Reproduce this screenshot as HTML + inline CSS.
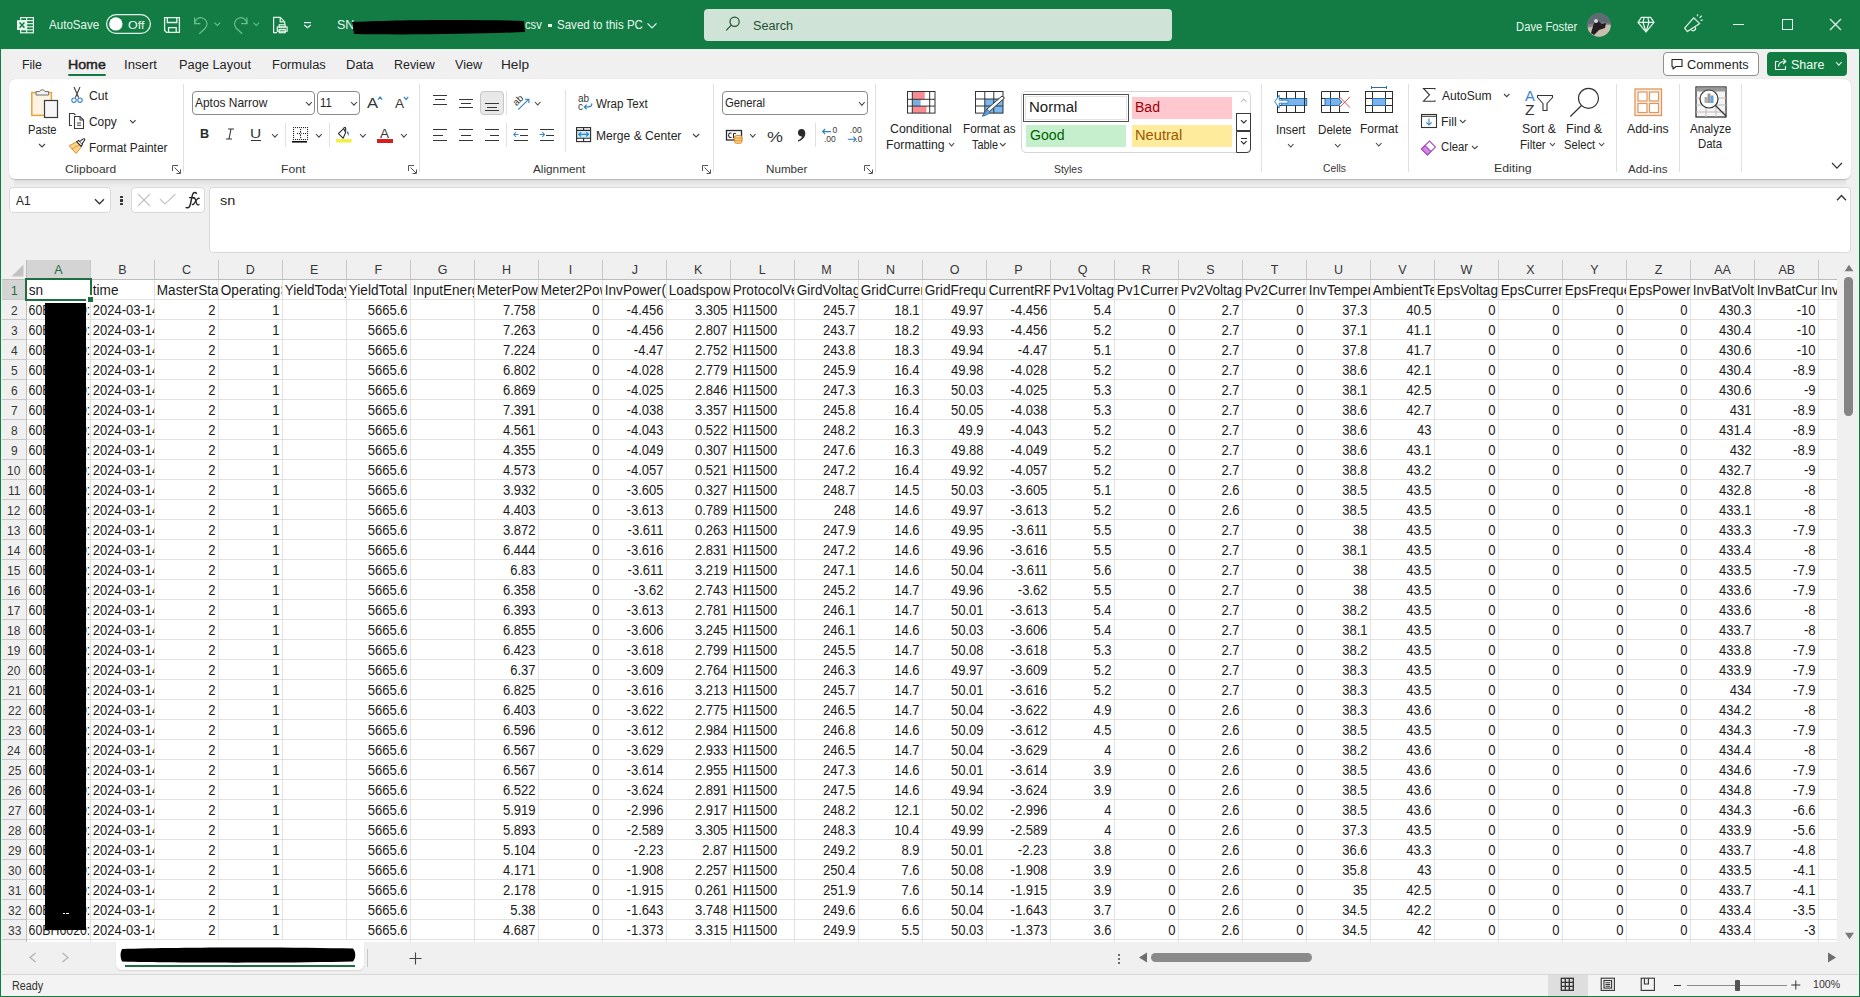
<!DOCTYPE html><html><head><meta charset="utf-8"><style>
*{margin:0;padding:0}
html,body{width:1860px;height:997px;overflow:hidden;background:#f0f0f0}
body{position:relative;font-family:"Liberation Sans",sans-serif}
.a{position:absolute}
.t{position:absolute;white-space:pre;line-height:normal;transform-origin:0 0}
.c{position:absolute;height:19px;box-sizing:border-box;overflow:hidden;white-space:pre;line-height:19px;color:#1a1a1a;font-size:14px;padding-top:0.5px;width:67.74px;transform:scaleX(0.93)}
.r{text-align:right;padding-right:2.37px;transform-origin:100% 0}
.l{padding-left:1.83px;transform-origin:0 0}
svg{overflow:visible}
</style></head><body><div class="a" style="left:0px;top:48px;width:1860px;height:949px;background:#f0f0f0"></div><span class="t" style="left:21.98px;top:58.00px;font-size:12.5px;color:#242424;transform:scaleX(0.9912);">File</span><span class="t" style="left:67.63px;top:58.00px;font-size:12.5px;color:#242424;transform:scaleX(1.1327);-webkit-text-stroke:0.45px #242424">Home</span><span class="t" style="left:124.18px;top:58.00px;font-size:12.5px;color:#242424;transform:scaleX(1.0533);">Insert</span><span class="t" style="left:178.94px;top:58.00px;font-size:12.5px;color:#242424;transform:scaleX(1.0252);">Page Layout</span><span class="t" style="left:272.23px;top:58.00px;font-size:12.5px;color:#242424;transform:scaleX(1.0331);">Formulas</span><span class="t" style="left:345.92px;top:58.00px;font-size:12.5px;color:#242424;transform:scaleX(1.0443);">Data</span><span class="t" style="left:393.97px;top:58.00px;font-size:12.5px;color:#242424;transform:scaleX(0.9950);">Review</span><span class="t" style="left:454.94px;top:58.00px;font-size:12.5px;color:#242424;transform:scaleX(1.0058);">View</span><span class="t" style="left:500.87px;top:58.00px;font-size:12.5px;color:#242424;transform:scaleX(1.0929);">Help</span><div class="a" style="left:68px;top:73.8px;width:38px;height:2.6px;background:#107c41;border-radius:1px"></div><div class="a" style="left:1663px;top:52px;width:96px;height:24px;background:#fff;border:1px solid #8f8f8f;border-radius:4px;box-sizing:border-box"></div><svg class="a" style="left:1670px;top:58px;" width="14" height="13" viewBox="0 0 14 13"><path d="M2 1.5 H12 V8.5 H6 L3 11 V8.5 H2 Z" fill="none" stroke="#242424" stroke-width="1.1" stroke-linejoin="round"/></svg><span class="t" style="left:1687.26px;top:58.00px;font-size:12.5px;color:#242424;transform:scaleX(1.0206);">Comments</span><div class="a" style="left:1767px;top:52px;width:80px;height:24px;background:#107c41;border-radius:4px"></div><svg class="a" style="left:1774px;top:57px;" width="14" height="14" viewBox="0 0 14 14"><g fill="none" stroke="#f2fff6" stroke-width="1.1" stroke-linejoin="round"><path d="M4.5 4.5 H1.5 V12.5 H11.5 V9"/><path d="M4.5 10 C4.5 6 7 4.5 11 4.5 M9 2 L11.8 4.5 L9 7"/></g></svg><span class="t" style="left:1790.64px;top:58.00px;font-size:12.5px;color:#f2fff6;transform:scaleX(1.0016);">Share</span><svg class="a" style="left:1834.6px;top:61.3px;" width="7.7" height="5.2" viewBox="0 0 7.7 5.2"><path d="M1 1 L3.85 4.2 L6.7 1" fill="none" stroke="#f2fff6" stroke-width="1.1"/></svg><div class="a" style="left:0px;top:0px;width:1860px;height:49px;background:#127c44"></div><div class="a" style="left:1px;top:49px;width:1858px;height:1px;background:#e3f3e8"></div><svg class="a" style="left:16px;top:16px;" width="18" height="18" viewBox="0 0 18 18"><g fill="none" stroke="#e6f8ec" stroke-width="1.2"><rect x="4.6" y="1.6" width="12.8" height="15.2"/><line x1="10.6" y1="1.6" x2="10.6" y2="16.8"/><line x1="4.6" y1="4.6" x2="17.4" y2="4.6"/><line x1="4.6" y1="7.7" x2="17.4" y2="7.7"/><line x1="4.6" y1="10.8" x2="17.4" y2="10.8"/><line x1="4.6" y1="13.8" x2="17.4" y2="13.8"/></g><rect x="1" y="4.2" width="10" height="9.8" fill="#e6f8ec"/><path d="M3.6 6.4 L8.4 11.8 M8.4 6.4 L3.6 11.8" stroke="#127c44" stroke-width="1.5"/></svg><span class="t" style="left:49.37px;top:18.00px;font-size:12.5px;color:#e6f8ec;transform:scaleX(0.9268);">AutoSave</span><svg class="a" style="left:106px;top:14px;" width="45" height="20" viewBox="0 0 45 20"><rect x="0.6" y="0.6" width="43.8" height="18.8" rx="9.4" fill="none" stroke="#e6f8ec" stroke-width="1.25"/></svg><svg class="a" style="left:108px;top:16px;" width="15" height="15" viewBox="0 0 15 15"><circle cx="7.8" cy="7.9" r="6.7" fill="#ffffff"/></svg><span class="t" style="left:128.31px;top:19.00px;font-size:11.5px;color:#e6f8ec;transform:scaleX(1.0818);">Off</span><svg class="a" style="left:163px;top:16px;" width="18" height="18" viewBox="0 0 18 18"><g fill="none" stroke="#e6f8ec" stroke-width="1.3"><path d="M1.6 1.6 H16.4 V16.4 H3.6 L1.6 14.4 Z"/><path d="M4.3 1.6 V6.5 H13.8 V1.6"/><path d="M5.6 16.4 V11.6 H13.2 V16.4"/></g></svg><svg class="a" style="left:192px;top:16px;" width="18" height="18" viewBox="0 0 18 18"><g fill="none" stroke="#6cbf8e" stroke-width="1.2"><path d="M2.6 1.5 V7.7 H8.4"/><path d="M2.6 7.7 A6.2 6.2 0 1 1 13.5 12 L7.3 17.8"/></g></svg><svg class="a" style="left:213px;top:21px;" width="9" height="6" viewBox="0 0 9 6"><path d="M1.4 1.6 L4.3 4.4 L7.2 1.6" fill="none" stroke="#6cbf8e" stroke-width="1.1"/></svg><svg class="a" style="left:232px;top:16px;" width="18" height="18" viewBox="0 0 18 18"><g fill="none" stroke="#6cbf8e" stroke-width="1.2"><path d="M14.9 1.5 V7.7 H9.1"/><path d="M14.9 7.7 A6.2 6.2 0 1 0 4 12 L10.2 17.8"/></g></svg><svg class="a" style="left:252px;top:21px;" width="9" height="6" viewBox="0 0 9 6"><path d="M1.4 1.6 L4.3 4.4 L7.2 1.6" fill="none" stroke="#6cbf8e" stroke-width="1.1"/></svg><svg class="a" style="left:272px;top:16px;" width="18" height="18" viewBox="0 0 18 18"><g fill="none" stroke="#e6f8ec" stroke-width="1.2"><path d="M5 16.6 H1.6 V1.4 H8.2 L12.7 5.9 V8.6"/><path d="M8.2 1.4 V5.9 H12.7"/><rect x="5.3" y="11" width="9.8" height="4.2"/><rect x="7.2" y="8.8" width="6" height="2.2"/><rect x="7.2" y="13.4" width="6" height="3.3"/></g></svg><svg class="a" style="left:302px;top:20px;" width="11" height="10" viewBox="0 0 11 10"><g fill="none" stroke="#e6f8ec" stroke-width="1.2"><line x1="2" y1="2.6" x2="9" y2="2.6"/><path d="M2.3 5 L5.5 7.8 L8.7 5"/></g></svg><span class="t" style="left:336.94px;top:18.00px;font-size:12.5px;color:#e6f8ec;">SN</span><svg class="a" style="left:348px;top:17px;" width="180" height="19" viewBox="0 0 180 19"><path d="M4 5 C40 3 120 2 176 4 L177 15 C130 17 60 18 6 17 Z" fill="#000"/></svg><span class="t" style="left:525.02px;top:18.00px;font-size:12.5px;color:#e6f8ec;transform:scaleX(0.8962);">csv</span><div class="a" style="left:548.3px;top:23.8px;width:3.4px;height:3.4px;background:#e6f8ec"></div><span class="t" style="left:556.68px;top:18.00px;font-size:12.5px;color:#e6f8ec;transform:scaleX(0.9230);">Saved to this PC</span><svg class="a" style="left:646px;top:20.5px;" width="12" height="10" viewBox="0 0 12 10"><path d="M1.5 2.4 L6 6.9 L10.5 2.4" fill="none" stroke="#e6f8ec" stroke-width="1.3"/></svg><div class="a" style="left:704px;top:9px;width:468px;height:32px;background:#cfe3d6;border-radius:4px"></div><svg class="a" style="left:724px;top:15px;" width="18" height="18" viewBox="0 0 18 18"><g fill="none" stroke="#1d5232" stroke-width="1.2"><circle cx="10.6" cy="6.8" r="4.6"/><line x1="7.3" y1="10.1" x2="2.2" y2="15.3"/></g></svg><span class="t" style="left:753.43px;top:19.00px;font-size:12.5px;color:#1f4f33;transform:scaleX(1.0118);">Search</span><span class="t" style="left:1516.47px;top:20.00px;font-size:12.5px;color:#e6f8ec;transform:scaleX(0.9006);">Dave Foster</span><svg class="a" style="left:1587px;top:13px;" width="24" height="24" viewBox="0 0 24 24"><defs><clipPath id="av"><circle cx="12" cy="12" r="11.8"/></clipPath></defs><g clip-path="url(#av)"><rect width="24" height="24" fill="#7d8388"/><path d="M0 0 H24 V11 C18 9 10 8 0 12 Z" fill="#5f6972"/><path d="M0 15 C8 12 16 11 24 12 V24 H0 Z" fill="#c9bfb0"/><path d="M4 20 L7 10 L11 8 L15 11 L19 10 L18 15 L12 17 L7 22 Z" fill="#231c20"/><circle cx="9" cy="8" r="2" fill="#d8d8e0"/></g></svg><svg class="a" style="left:1636px;top:15px;" width="20" height="18" viewBox="0 0 20 18"><g fill="none" stroke="#e6f8ec" stroke-width="1.2" stroke-linejoin="round"><path d="M2 7.4 L5.4 2.4 H14.6 L18 7.4 L10 16.8 Z"/><path d="M2 7.4 H18 M8.2 2.4 L7 7.4 L10 16.8 L13 7.4 L11.8 2.4"/></g></svg><svg class="a" style="left:1682px;top:12px;" width="22" height="22" viewBox="0 0 22 22"><g fill="none" stroke="#e6f8ec" stroke-width="1.2" stroke-linejoin="round"><path d="M2.6 16.2 L11.6 5.8 L17.8 11.6 L5.4 19.6 Z"/><path d="M9.4 17.6 A2.1 2.1 0 0 0 13.2 15.2"/><path d="M15.2 4.2 L15.9 2.4 M17.6 5.8 L19.8 3.6 M18.6 8.4 L20.8 8"/></g></svg><div class="a" style="left:1733px;top:24px;width:11px;height:1.2px;background:#e6f8ec"></div><div class="a" style="left:1782px;top:19px;width:10.5px;height:10.5px;border:1.2px solid #e6f8ec;box-sizing:border-box"></div><svg class="a" style="left:1829px;top:18px;" width="13" height="13" viewBox="0 0 13 13"><path d="M1 1 L12 12 M12 1 L1 12" stroke="#e6f8ec" stroke-width="1.2"/></svg><div class="a" style="left:14px;top:176px;width:1832px;height:11px;background:linear-gradient(#cfcfcf,#dedede 30%,#efefef)"></div><div class="a" style="left:9px;top:79px;width:1842px;height:100px;background:#fff;border-radius:6px;box-shadow:0 0.5px 0.8px rgba(0,0,0,0.16), 0 0 1px rgba(0,0,0,0.10)"></div><svg class="a" style="left:30px;top:87px;" width="29" height="32" viewBox="0 0 29 32"><rect x="1.8" y="5.6" width="19.6" height="22.8" fill="#fdf3e2" stroke="#e8a33d" stroke-width="1.5"/><path d="M6 8 V4.6 H9.5 A3 3 0 0 1 15 4.6 H18.6 V8 Z" fill="#f4f4f4" stroke="#6e6e6e" stroke-width="1"/><rect x="14.5" y="13.5" width="13" height="17" fill="#f7f7f7" stroke="#3b3b3b" stroke-width="1.2"/></svg><span class="t" style="left:27.98px;top:123.00px;font-size:12px;color:#242424;transform:scaleX(0.9294);">Paste</span><svg class="a" style="left:37.5px;top:143px;" width="8" height="5" viewBox="0 0 8 5"><path d="M1 1 L4.0 4 L7 1" fill="none" stroke="#424242" stroke-width="1.1"/></svg><svg class="a" style="left:70px;top:86px;" width="14" height="18" viewBox="0 0 14 18"><g fill="none" stroke-width="1.1"><path d="M4 1 L8.6 11.5 M10 1 L5.4 11.5" stroke="#3b3b3b"/><circle cx="4" cy="14.2" r="2.2" stroke="#3a86c8"/><circle cx="10" cy="14.2" r="2.2" stroke="#3a86c8"/></g></svg><span class="t" style="left:89.09px;top:89.00px;font-size:12px;color:#242424;transform:scaleX(1.0128);">Cut</span><svg class="a" style="left:68px;top:112px;" width="18" height="18" viewBox="0 0 18 18"><g fill="none" stroke="#3b3b3b" stroke-width="1.1"><path d="M4 13.5 H1.5 V1.5 H6 L7.5 3"/><path d="M6.5 4.5 H12 L15.5 8 V16.5 H6.5 Z"/><path d="M12 4.5 V8 H15.5"/><path d="M9 11 H13 M9 13.3 H13"/></g></svg><span class="t" style="left:89.11px;top:115.00px;font-size:12px;color:#242424;transform:scaleX(0.9894);">Copy</span><svg class="a" style="left:128.7px;top:118.8px;" width="7.6" height="5" viewBox="0 0 7.6 5"><path d="M1 1 L3.8 4 L6.6 1" fill="none" stroke="#424242" stroke-width="1.1"/></svg><svg class="a" style="left:68px;top:138px;" width="18" height="17" viewBox="0 0 18 17"><path d="M1.2 7.8 L8.8 3.8 L13.4 8.6 L8.2 15.6 Z" fill="#fbd38c" stroke="#e0942e" stroke-width="1" stroke-linejoin="round"/><path d="M3.5 11 L11.2 7.2" stroke="#e0942e" stroke-width="0.9"/><path d="M8.6 3.6 L10.6 2.4 L14.4 6.2 L13.2 8.4 Z" fill="#fff" stroke="#2a2a2a" stroke-width="1.1" stroke-linejoin="round"/><path d="M11.6 3.6 L15.2 0.9 C16.2 0.3 17.2 1.3 16.6 2.3 L14 5.8" fill="#fff" stroke="#2a2a2a" stroke-width="1.1"/></svg><span class="t" style="left:88.72px;top:141.00px;font-size:12px;color:#242424;transform:scaleX(0.9887);">Format Painter</span><span class="t" style="left:64.90px;top:163.00px;font-size:11.5px;color:#363636;transform:scaleX(1.0412);">Clipboard</span><svg class="a" style="left:172px;top:165px;" width="9" height="9" viewBox="0 0 9 9"><g fill="none" stroke="#555" stroke-width="1"><path d="M0.5 6 V0.5 H6"/><path d="M2.5 2.5 L8 8 M4.5 8.5 H8.5 V4.5"/></g></svg><div class="a" style="left:183px;top:84px;width:1px;height:88px;background:#e0e0e0"></div><div class="a" style="left:192px;top:91px;width:123px;height:24px;border:1px solid #8a8a8a;border-radius:4px;box-sizing:border-box"></div><span class="t" style="left:195.27px;top:95.00px;font-size:13px;color:#242424;transform:scaleX(0.9181);">Aptos Narrow</span><svg class="a" style="left:304.6px;top:100.5px;" width="7.9" height="5.2" viewBox="0 0 7.9 5.2"><path d="M1 1 L3.95 4.2 L6.9 1" fill="none" stroke="#424242" stroke-width="1.1"/></svg><div class="a" style="left:317px;top:91px;width:43px;height:24px;border:1px solid #8a8a8a;border-radius:4px;box-sizing:border-box"></div><span class="t" style="left:319.66px;top:95.00px;font-size:13px;color:#242424;transform:scaleX(0.8659);">11</span><svg class="a" style="left:349.8px;top:100.5px;" width="7.9" height="5.2" viewBox="0 0 7.9 5.2"><path d="M1 1 L3.95 4.2 L6.9 1" fill="none" stroke="#424242" stroke-width="1.1"/></svg><span class="t" style="left:366.96px;top:94.00px;font-size:15.5px;color:#363636;transform:scaleX(1.0712);">A</span><svg class="a" style="left:376.5px;top:95.5px;" width="6.2" height="4.6" viewBox="0 0 6.2 4.6"><path d="M1 3.6 L3.1 1 L5.2 3.6" fill="none" stroke="#3a86c8" stroke-width="1.2"/></svg><span class="t" style="left:394.67px;top:96.00px;font-size:13px;color:#363636;transform:scaleX(1.0450);">A</span><svg class="a" style="left:402.5px;top:95.5px;" width="6.2" height="4.6" viewBox="0 0 6.2 4.6"><path d="M1 1 L3.1 3.6 L5.2 1" fill="none" stroke="#3a86c8" stroke-width="1.2"/></svg><span class="t" style="left:199.65px;top:126.00px;font-size:13px;color:#2a2a2a;font-weight:700;transform:scaleX(0.9710);">B</span><svg class="a" style="left:225px;top:128px;" width="10" height="12" viewBox="0 0 10 12"><g stroke="#363636" stroke-width="1.1"><path d="M3 1 H9 M1 11 H7 M6 1 L4 11"/></g></svg><span class="t" style="left:249.80px;top:127.00px;font-size:12px;color:#363636;transform:scaleX(1.2922);">U</span><div class="a" style="left:250.5px;top:140px;width:10px;height:1.1px;background:#363636"></div><svg class="a" style="left:270.5px;top:132.8px;" width="7.8" height="5.2" viewBox="0 0 7.8 5.2"><path d="M1 1 L3.9 4.2 L6.8 1" fill="none" stroke="#424242" stroke-width="1.1"/></svg><div class="a" style="left:285px;top:123px;width:1px;height:24px;background:#e0e0e0"></div><svg class="a" style="left:292px;top:126px;" width="17" height="18" viewBox="0 0 17 18"><g fill="#2a2a2a"><rect x="1" y="1" width="1.1" height="1.1"/><rect x="1" y="13" width="1.1" height="1.1"/><rect x="3" y="1" width="1.1" height="1.1"/><rect x="3" y="13" width="1.1" height="1.1"/><rect x="5" y="1" width="1.1" height="1.1"/><rect x="5" y="13" width="1.1" height="1.1"/><rect x="7" y="1" width="1.1" height="1.1"/><rect x="7" y="13" width="1.1" height="1.1"/><rect x="9" y="1" width="1.1" height="1.1"/><rect x="9" y="13" width="1.1" height="1.1"/><rect x="11" y="1" width="1.1" height="1.1"/><rect x="11" y="13" width="1.1" height="1.1"/><rect x="13" y="1" width="1.1" height="1.1"/><rect x="13" y="13" width="1.1" height="1.1"/><rect x="15" y="1" width="1.1" height="1.1"/><rect x="15" y="13" width="1.1" height="1.1"/><rect x="1" y="3" width="1.1" height="1.1"/><rect x="15" y="3" width="1.1" height="1.1"/><rect x="1" y="5" width="1.1" height="1.1"/><rect x="15" y="5" width="1.1" height="1.1"/><rect x="1" y="7" width="1.1" height="1.1"/><rect x="15" y="7" width="1.1" height="1.1"/><rect x="1" y="9" width="1.1" height="1.1"/><rect x="15" y="9" width="1.1" height="1.1"/><rect x="1" y="11" width="1.1" height="1.1"/><rect x="15" y="11" width="1.1" height="1.1"/><rect x="5" y="7" width="1.1" height="1.1"/><rect x="7" y="7" width="1.1" height="1.1"/><rect x="11" y="7" width="1.1" height="1.1"/><rect x="13" y="7" width="1.1" height="1.1"/><rect x="8" y="3" width="1.1" height="1.1"/><rect x="8" y="5" width="1.1" height="1.1"/><rect x="8" y="9" width="1.1" height="1.1"/><rect x="8" y="11" width="1.1" height="1.1"/></g><path d="M7.4 7.5 L8.5 6.4 L9.6 7.5 L8.5 8.6 Z" fill="none" stroke="#2a2a2a" stroke-width="0.8"/><rect x="0" y="15" width="15" height="1.6" fill="#111"/></svg><svg class="a" style="left:314.6px;top:133px;" width="7.8" height="5.2" viewBox="0 0 7.8 5.2"><path d="M1 1 L3.9 4.2 L6.8 1" fill="none" stroke="#424242" stroke-width="1.1"/></svg><div class="a" style="left:329px;top:123px;width:1px;height:24px;background:#e0e0e0"></div><svg class="a" style="left:336px;top:126px;" width="17" height="18" viewBox="0 0 17 18"><path d="M2.4 7.7 L7.6 2.6 L9.6 6.6 L7.1 12.2 Z" fill="#fff" stroke="#2a2a2a" stroke-width="1.1" stroke-linejoin="round"/><path d="M7.6 2.6 C8 0.8 9.6 0.8 9.7 2.4 V5.6" fill="none" stroke="#2a2a2a" stroke-width="1.1"/><path d="M10.8 6.2 C12.2 4.2 13 6.5 12.6 10.2 C12 8.6 11.6 7.6 10.8 6.2 Z" fill="#1e5a8c"/><rect x="0.2" y="13.1" width="15.4" height="3.4" fill="#f3f03c"/></svg><svg class="a" style="left:358.8px;top:133px;" width="7.8" height="5.2" viewBox="0 0 7.8 5.2"><path d="M1 1 L3.9 4.2 L6.8 1" fill="none" stroke="#424242" stroke-width="1.1"/></svg><span class="t" style="left:380.47px;top:127.00px;font-size:12.5px;color:#363636;transform:scaleX(1.0868);">A</span><div class="a" style="left:377px;top:139.2px;width:16px;height:3.8px;background:#d81e1e"></div><svg class="a" style="left:399.5px;top:133px;" width="7.8" height="5.2" viewBox="0 0 7.8 5.2"><path d="M1 1 L3.9 4.2 L6.8 1" fill="none" stroke="#424242" stroke-width="1.1"/></svg><span class="t" style="left:281.40px;top:163.00px;font-size:11.5px;color:#363636;transform:scaleX(1.0562);">Font</span><svg class="a" style="left:408px;top:165px;" width="9" height="9" viewBox="0 0 9 9"><g fill="none" stroke="#555" stroke-width="1"><path d="M0.5 6 V0.5 H6"/><path d="M2.5 2.5 L8 8 M4.5 8.5 H8.5 V4.5"/></g></svg><div class="a" style="left:419px;top:84px;width:1px;height:88px;background:#e0e0e0"></div><div class="a" style="left:433px;top:95.1px;width:14px;height:1.2px;background:#363636"></div><div class="a" style="left:435px;top:99.3px;width:10px;height:1.2px;background:#363636"></div><div class="a" style="left:433px;top:103.7px;width:14px;height:1.2px;background:#363636"></div><div class="a" style="left:459px;top:98.7px;width:14px;height:1.2px;background:#363636"></div><div class="a" style="left:461px;top:102.5px;width:10px;height:1.2px;background:#363636"></div><div class="a" style="left:459px;top:106.5px;width:14px;height:1.2px;background:#363636"></div><div class="a" style="left:480px;top:91px;width:24px;height:24px;background:#e8e8e8;border:1px solid #c6c6c6;border-radius:4px;box-sizing:border-box"></div><div class="a" style="left:485px;top:102.5px;width:14px;height:1.2px;background:#363636"></div><div class="a" style="left:487px;top:106.5px;width:10px;height:1.2px;background:#363636"></div><div class="a" style="left:485px;top:110.3px;width:14px;height:1.2px;background:#363636"></div><div class="a" style="left:506px;top:91px;width:1px;height:24px;background:#e0e0e0"></div><svg class="a" style="left:512px;top:94px;" width="18" height="17" viewBox="0 0 18 17"><g transform="rotate(-45 6.3 6.5)"><text x="6.3" y="9.3" text-anchor="middle" font-family="Liberation Sans" font-size="9.5" fill="#2a2a2a">ab</text></g><path d="M6.2 15.6 L16.6 5.4 M13 5.2 H16.9 V9" fill="none" stroke="#2f7fc0" stroke-width="1.1"/></svg><svg class="a" style="left:534px;top:101px;" width="7.4" height="5" viewBox="0 0 7.4 5"><path d="M1 1 L3.7 4 L6.4 1" fill="none" stroke="#424242" stroke-width="1.1"/></svg><div class="a" style="left:565px;top:90px;width:1px;height:62px;background:#e0e0e0"></div><svg class="a" style="left:577px;top:93px;" width="17" height="18" viewBox="0 0 17 18"><text x="1" y="9.4" font-family="Liberation Sans" font-size="10" fill="#3a3a3a">ab</text><text x="1" y="16.6" font-family="Liberation Sans" font-size="10" fill="#3a3a3a">c</text><path d="M14.6 10.4 C15.4 12.6 13.6 13.9 11.2 13.9 H7.5 M9.6 11.6 L7.3 13.9 L9.6 16.3" fill="none" stroke="#2f86c4" stroke-width="1.2"/></svg><span class="t" style="left:596.44px;top:97.00px;font-size:12.5px;color:#242424;transform:scaleX(0.9253);">Wrap Text</span><div class="a" style="left:433px;top:128.7px;width:14px;height:1.2px;background:#363636"></div><div class="a" style="left:433px;top:134.6px;width:9.5px;height:1.2px;background:#363636"></div><div class="a" style="left:433px;top:140.3px;width:14px;height:1.2px;background:#363636"></div><div class="a" style="left:459px;top:128.7px;width:14px;height:1.2px;background:#363636"></div><div class="a" style="left:461px;top:134.6px;width:10px;height:1.2px;background:#363636"></div><div class="a" style="left:459px;top:140.3px;width:14px;height:1.2px;background:#363636"></div><div class="a" style="left:485px;top:128.7px;width:14px;height:1.2px;background:#363636"></div><div class="a" style="left:489.5px;top:134.6px;width:9.5px;height:1.2px;background:#363636"></div><div class="a" style="left:485px;top:140.3px;width:14px;height:1.2px;background:#363636"></div><div class="a" style="left:506px;top:123px;width:1px;height:24px;background:#e0e0e0"></div><div class="a" style="left:514px;top:128.7px;width:14px;height:1.2px;background:#363636"></div><div class="a" style="left:514px;top:140.3px;width:14px;height:1.2px;background:#363636"></div><div class="a" style="left:519.5px;top:134.6px;width:8.5px;height:1.2px;background:#363636"></div><svg class="a" style="left:513px;top:131px;" width="6" height="7" viewBox="0 0 6 7"><path d="M5.5 3.5 H0.8 M3 1 L0.8 3.5 L3 6" fill="none" stroke="#3a86c8" stroke-width="1.1"/></svg><div class="a" style="left:540px;top:128.7px;width:14px;height:1.2px;background:#363636"></div><div class="a" style="left:540px;top:140.3px;width:14px;height:1.2px;background:#363636"></div><div class="a" style="left:546px;top:134.6px;width:8px;height:1.2px;background:#363636"></div><svg class="a" style="left:539px;top:131px;" width="7" height="7" viewBox="0 0 7 7"><path d="M0.5 3.5 H5.5 M3.3 1 L5.5 3.5 L3.3 6" fill="none" stroke="#3a86c8" stroke-width="1.1"/></svg><svg class="a" style="left:575px;top:126px;" width="17" height="17" viewBox="0 0 17 17"><rect x="1.6" y="4.2" width="14" height="8.1" fill="#c9ecf8"/><g fill="none" stroke="#2b2b2b" stroke-width="1.1"><rect x="1.6" y="1.6" width="14" height="14"/><path d="M1.6 4.4 H15.6 M1.6 12.3 H15.6 M8.6 1.6 V4.4 M8.6 12.3 V15.6"/></g><path d="M3.8 8.3 H13.4 M6 6.1 L3.8 8.3 L6 10.5 M11.2 6.1 L13.4 8.3 L11.2 10.5" fill="none" stroke="#2f86c4" stroke-width="1.2"/></svg><span class="t" style="left:595.50px;top:129.00px;font-size:12.5px;color:#242424;transform:scaleX(0.9678);">Merge &amp; Center</span><svg class="a" style="left:692.2px;top:133.2px;" width="8.2" height="5" viewBox="0 0 8.2 5"><path d="M1 1 L4.1 4 L7.2 1" fill="none" stroke="#424242" stroke-width="1.1"/></svg><span class="t" style="left:532.57px;top:163.00px;font-size:11.5px;color:#363636;transform:scaleX(1.0229);">Alignment</span><svg class="a" style="left:702px;top:165px;" width="9" height="9" viewBox="0 0 9 9"><g fill="none" stroke="#555" stroke-width="1"><path d="M0.5 6 V0.5 H6"/><path d="M2.5 2.5 L8 8 M4.5 8.5 H8.5 V4.5"/></g></svg><div class="a" style="left:713px;top:84px;width:1px;height:88px;background:#e0e0e0"></div><div class="a" style="left:722px;top:91px;width:146px;height:24px;border:1px solid #8a8a8a;border-radius:4px;box-sizing:border-box"></div><span class="t" style="left:725.14px;top:96.00px;font-size:12.5px;color:#242424;transform:scaleX(0.9023);">General</span><svg class="a" style="left:857.7px;top:100.7px;" width="7.7" height="5.3" viewBox="0 0 7.7 5.3"><path d="M1 1 L3.85 4.3 L6.7 1" fill="none" stroke="#424242" stroke-width="1.1"/></svg><svg class="a" style="left:725px;top:129px;" width="19" height="15" viewBox="0 0 19 15"><rect x="1.5" y="1.5" width="15" height="9.5" fill="#fff" stroke="#2a2a2a" stroke-width="1.3"/><path d="M6.5 4.3 C5 3.5 3.6 4.3 3.6 6.3 C3.6 8.3 5 9 6.5 8.2 M8.5 9.2 V5 C9 4 10.5 4 11 4.6" fill="none" stroke="#2a2a2a" stroke-width="1.1"/><rect x="9.5" y="6.5" width="7.5" height="7.8" rx="2.2" fill="#f8d49a" stroke="#e08a1e" stroke-width="1"/><path d="M9.5 9.1 H17 M9.5 11.7 H17" stroke="#e08a1e" stroke-width="0.9"/></svg><svg class="a" style="left:748.8px;top:132.8px;" width="7.5" height="5.2" viewBox="0 0 7.5 5.2"><path d="M1 1 L3.75 4.2 L6.5 1" fill="none" stroke="#424242" stroke-width="1.1"/></svg><span class="t" style="left:767.07px;top:128.00px;font-size:15.5px;color:#363636;transform:scaleX(1.1566);">%</span><svg class="a" style="left:796px;top:128px;" width="11" height="15" viewBox="0 0 11 15"><path d="M5.5 1 C8.2 1 9.3 3.2 9.3 5.2 C9.3 9 6.5 12.2 2.2 13.5 L1.8 12.6 C4.5 11.4 5.9 9.8 6 8.6 C3.6 8.6 1.9 7 1.9 4.8 C1.9 2.6 3.4 1 5.5 1 Z" fill="#2a2a2a"/></svg><div class="a" style="left:815px;top:123px;width:1px;height:24px;background:#e0e0e0"></div><svg class="a" style="left:821px;top:126px;" width="18" height="18" viewBox="0 0 18 18"><text x="11.6" y="7" font-family="Liberation Sans" font-size="8.5" fill="#363636">0</text><text x="3" y="15.7" font-family="Liberation Sans" font-size="8.5" fill="#363636">.00</text><path d="M10 5.6 H1.6 M4.2 3 L1.6 5.6 L4.2 8.2" fill="none" stroke="#2f7fc0" stroke-width="1.1"/></svg><svg class="a" style="left:846px;top:126px;" width="18" height="18" viewBox="0 0 18 18"><text x="3.8" y="7" font-family="Liberation Sans" font-size="8.5" fill="#363636">.00</text><text x="9.5" y="15.7" font-family="Liberation Sans" font-size="8.5" fill="#363636">.0</text><path d="M1.8 13.3 H10 M7.4 10.7 L10 13.3 L7.4 15.9" fill="none" stroke="#2f7fc0" stroke-width="1.1"/></svg><span class="t" style="left:765.74px;top:163.00px;font-size:11.5px;color:#363636;transform:scaleX(1.0135);">Number</span><svg class="a" style="left:864px;top:165px;" width="9" height="9" viewBox="0 0 9 9"><g fill="none" stroke="#555" stroke-width="1"><path d="M0.5 6 V0.5 H6"/><path d="M2.5 2.5 L8 8 M4.5 8.5 H8.5 V4.5"/></g></svg><div class="a" style="left:875px;top:84px;width:1px;height:88px;background:#e0e0e0"></div><svg class="a" style="left:906.5px;top:90.5px;" width="29" height="23" viewBox="0 0 29 23"><g><rect x="5.3" y="0.8" width="12.4" height="7.5" fill="#f98b92"/><rect x="5.3" y="8.3" width="8.3" height="6.8" fill="#78aee0"/><rect x="5.3" y="15.1" width="14.2" height="7" fill="#f98b92"/><g fill="none" stroke="#333" stroke-width="1"><rect x="0.5" y="0.5" width="27.5" height="21.6"/><path d="M5.3 0.5 V22 M22.7 0.5 V22 M0.5 8.3 H28 M0.5 15.1 H28"/></g></g></svg><svg class="a" style="left:975px;top:90.5px;" width="31" height="27" viewBox="0 0 31 27"><rect x="9.8" y="8" width="18.2" height="14.2" fill="#78b8ee"/><g fill="none" stroke="#333" stroke-width="1"><rect x="0.5" y="0.5" width="27.5" height="21.6"/><path d="M9.8 0.5 V22 M18.8 0.5 V22 M0.5 8 H28 M0.5 15 H28"/></g><path d="M29.5 7 L14 21 C12 23 9 24.5 7.5 25 C9 23 10 20 12 18 L27 5 Z" fill="#fff" stroke="#333" stroke-width="1"/><path d="M13 18.5 C10.5 20 9.5 23 7.5 25 C11 24.5 14 23 15 21 Z" fill="#5ba4e0" stroke="#2f6fad" stroke-width="0.8"/></svg><span class="t" style="left:890.28px;top:122.00px;font-size:12.5px;color:#242424;transform:scaleX(0.9854);">Conditional</span><span class="t" style="left:886.19px;top:138.00px;font-size:12.5px;color:#242424;transform:scaleX(0.9809);">Formatting</span><svg class="a" style="left:947.9px;top:142px;" width="7.2" height="5" viewBox="0 0 7.2 5"><path d="M1 1 L3.6 4 L6.2 1" fill="none" stroke="#424242" stroke-width="1.1"/></svg><span class="t" style="left:962.54px;top:122.00px;font-size:12.5px;color:#242424;transform:scaleX(0.9346);">Format as</span><span class="t" style="left:971.56px;top:138.00px;font-size:12.5px;color:#242424;transform:scaleX(0.8671);">Table</span><svg class="a" style="left:999.4px;top:142px;" width="7.6" height="5" viewBox="0 0 7.6 5"><path d="M1 1 L3.8 4 L6.6 1" fill="none" stroke="#424242" stroke-width="1.1"/></svg><div class="a" style="left:1021px;top:91px;width:230px;height:62px;border:1px solid #d6d6d6;border-radius:5px;box-sizing:border-box"></div><div class="a" style="left:1023px;top:94px;width:106px;height:28px;background:#fff;border:1.3px solid #4f4f4f;box-shadow:inset 0 0 0 1px #fff, inset 0 0 0 2px #e4e4e4;box-sizing:border-box"></div><span class="t" style="left:1029.26px;top:99.00px;font-size:14px;color:#1a1a1a;transform:scaleX(1.0717);">Normal</span><div class="a" style="left:1132px;top:97px;width:100px;height:22px;background:#ffc7ce"></div><span class="t" style="left:1135.44px;top:99.00px;font-size:14px;color:#9c0006;transform:scaleX(1.0020);">Bad</span><div class="a" style="left:1026px;top:125px;width:100px;height:22px;background:#c6efce"></div><span class="t" style="left:1029.79px;top:127.00px;font-size:14px;color:#006100;transform:scaleX(1.0075);">Good</span><div class="a" style="left:1132px;top:125px;width:100px;height:22px;background:#ffeb9c"></div><span class="t" style="left:1135.39px;top:127.00px;font-size:14px;color:#9c5700;transform:scaleX(1.0476);">Neutral</span><svg class="a" style="left:1239.8px;top:97.6px;" width="7.4" height="5" viewBox="0 0 7.4 5"><path d="M1 4 L3.7 1 L6.4 4" fill="none" stroke="#b5b5b5" stroke-width="1.1"/></svg><div class="a" style="left:1236px;top:112.5px;width:15px;height:18px;border:1.2px solid #3a3a3a;border-radius:0 0 0 0;box-sizing:border-box;background:#fff"></div><svg class="a" style="left:1239.6px;top:119px;" width="7.6" height="5" viewBox="0 0 7.6 5"><path d="M1 1 L3.8 4 L6.6 1" fill="none" stroke="#2a2a2a" stroke-width="1.1"/></svg><div class="a" style="left:1236px;top:131px;width:15px;height:22px;border:1.2px solid #3a3a3a;border-radius:0 0 4px 0;box-sizing:border-box;background:#fff"></div><div class="a" style="left:1240.5px;top:137.5px;width:6px;height:1.1px;background:#2a2a2a"></div><svg class="a" style="left:1239.6px;top:139.5px;" width="7.6" height="5" viewBox="0 0 7.6 5"><path d="M1 1 L3.8 4 L6.6 1" fill="none" stroke="#2a2a2a" stroke-width="1.1"/></svg><span class="t" style="left:1054.23px;top:163.00px;font-size:11.5px;color:#363636;transform:scaleX(0.9049);">Styles</span><div class="a" style="left:1261px;top:84px;width:1px;height:88px;background:#e0e0e0"></div><svg class="a" style="left:1274px;top:91px;" width="33" height="23" viewBox="0 0 33 23"><rect x="7.7" y="7.5" width="25" height="7" fill="#7ab4ea" stroke="#2a6cb0" stroke-width="1"/><g fill="none" stroke="#2b2b2b" stroke-width="1"><rect x="3.5" y="0.5" width="27" height="21"/><path d="M12.5 0.5 V7.5 M21.5 0.5 V7.5 M12.5 14.5 V21.5 M21.5 14.5 V21.5 M3.5 7.5 H7.7 M3.5 14.5 H7.7"/></g><path d="M14 9.2 H5.2 V4.2 L0.8 10.7 L5.2 17.2 V12.2 H14 Z" fill="#fff" stroke="#2f86c4" stroke-width="1" stroke-linejoin="round"/></svg><span class="t" style="left:1275.51px;top:123.00px;font-size:12.5px;color:#242424;transform:scaleX(0.9400);">Insert</span><svg class="a" style="left:1287px;top:143px;" width="7.5" height="5" viewBox="0 0 7.5 5"><path d="M1 1 L3.75 4 L6.5 1" fill="none" stroke="#424242" stroke-width="1.1"/></svg><svg class="a" style="left:1320px;top:91px;" width="31" height="23" viewBox="0 0 31 23"><g fill="none" stroke="#2b2b2b" stroke-width="1"><path d="M29 0.5 H1.5 V21.5 H29 M1.5 7.5 H5 M1.5 14.5 H5 M10.5 0.5 V7.5 M10.5 14.5 V21.5 M19.5 0.5 V7.5 M19.5 14.5 V21.5"/></g><path d="M5 7.5 H18.5 L21.8 11 L18.5 14.5 H5 Z" fill="#7ab4ea" stroke="#2a6cb0" stroke-width="1"/><path d="M10.5 7.5 V14.5" stroke="#2a6cb0" stroke-width="1"/><path d="M19.4 5.8 L30 16.6 M30 5.8 L19.4 16.6" stroke="#e05252" stroke-width="1"/></svg><span class="t" style="left:1317.94px;top:123.00px;font-size:12.5px;color:#242424;transform:scaleX(0.9288);">Delete</span><svg class="a" style="left:1333.5px;top:143px;" width="7.5" height="5" viewBox="0 0 7.5 5"><path d="M1 1 L3.75 4 L6.5 1" fill="none" stroke="#424242" stroke-width="1.1"/></svg><svg class="a" style="left:1365px;top:86px;" width="29" height="28" viewBox="0 0 29 28"><path d="M6.5 1.5 H21.5 M6.5 0 V3 M21.5 0 V3" stroke="#2b6fa0" stroke-width="1"/><rect x="7.5" y="12.5" width="13" height="7" fill="#7ab4ea"/><g fill="none" stroke="#2b2b2b" stroke-width="1"><rect x="0.5" y="5.5" width="27" height="21"/><path d="M7.5 5.5 V26.5 M20.5 5.5 V26.5 M0.5 12.5 H27.5 M0.5 19.5 H27.5"/></g><rect x="7.5" y="12.5" width="13" height="7" fill="none" stroke="#2a6cb0" stroke-width="1"/></svg><span class="t" style="left:1359.81px;top:122.00px;font-size:12.5px;color:#242424;transform:scaleX(0.9592);">Format</span><svg class="a" style="left:1375px;top:142px;" width="7.5" height="5" viewBox="0 0 7.5 5"><path d="M1 1 L3.75 4 L6.5 1" fill="none" stroke="#424242" stroke-width="1.1"/></svg><span class="t" style="left:1323.48px;top:162.00px;font-size:11.5px;color:#363636;transform:scaleX(0.8991);">Cells</span><div class="a" style="left:1408px;top:84px;width:1px;height:88px;background:#e0e0e0"></div><svg class="a" style="left:1422px;top:87px;" width="15" height="16" viewBox="0 0 15 16"><path d="M13 2.5 V1.5 H1.5 L7.5 7.8 L1.5 14.2 H13 V13.2" fill="none" stroke="#333" stroke-width="1.1"/></svg><span class="t" style="left:1441.57px;top:89.00px;font-size:12.5px;color:#242424;transform:scaleX(0.9651);">AutoSum</span><svg class="a" style="left:1502.7px;top:93.2px;" width="7.4" height="4.7" viewBox="0 0 7.4 4.7"><path d="M1 1 L3.7 3.7 L6.4 1" fill="none" stroke="#424242" stroke-width="1.1"/></svg><svg class="a" style="left:1420px;top:113px;" width="18" height="16" viewBox="0 0 18 16"><rect x="1.5" y="1.5" width="15" height="13" fill="none" stroke="#333" stroke-width="1.1"/><line x1="1.5" y1="3.3" x2="16.5" y2="3.3" stroke="#333" stroke-width="1"/><path d="M9 5.5 V12 M6.3 9.3 L9 12 L11.7 9.3" fill="none" stroke="#3a86c8" stroke-width="1.1"/></svg><span class="t" style="left:1440.78px;top:115.00px;font-size:12.5px;color:#242424;transform:scaleX(0.9863);">Fill</span><svg class="a" style="left:1458.7px;top:119.2px;" width="7.6" height="4.8" viewBox="0 0 7.6 4.8"><path d="M1 1 L3.8 3.8 L6.6 1" fill="none" stroke="#424242" stroke-width="1.1"/></svg><svg class="a" style="left:1420px;top:139px;" width="17" height="16" viewBox="0 0 17 16"><path d="M1.5 10 L9.5 2 L15.5 8 L7.5 16 Z" fill="#fff" stroke="#a64fc0" stroke-width="1.1"/><path d="M1.5 10 L5 6.5 L11 12.5 L7.5 16 Z" fill="#d487e4" stroke="#a64fc0" stroke-width="1.1"/></svg><span class="t" style="left:1441.23px;top:140.00px;font-size:12.5px;color:#242424;transform:scaleX(0.9049);">Clear</span><svg class="a" style="left:1470.5px;top:145.3px;" width="7.6" height="4.8" viewBox="0 0 7.6 4.8"><path d="M1 1 L3.8 3.8 L6.6 1" fill="none" stroke="#424242" stroke-width="1.1"/></svg><span class="t" style="left:1524.96px;top:87.00px;font-size:15px;color:#3a86c8;transform:scaleX(0.9862);">A</span><span class="t" style="left:1525.00px;top:101.00px;font-size:15px;color:#333;transform:scaleX(1.0350);">Z</span><svg class="a" style="left:1536px;top:94px;" width="18" height="18" viewBox="0 0 18 18"><path d="M1.5 1.5 H16.5 V3.5 L11 9.5 V16.5 H7 V9.5 L1.5 3.5 Z" fill="none" stroke="#333" stroke-width="1.1" stroke-linejoin="round"/></svg><span class="t" style="left:1521.75px;top:122.00px;font-size:12.5px;color:#242424;transform:scaleX(0.9794);">Sort &amp;</span><span class="t" style="left:1519.94px;top:138.00px;font-size:12.5px;color:#242424;transform:scaleX(0.9261);">Filter</span><svg class="a" style="left:1549px;top:142.2px;" width="7" height="4.8" viewBox="0 0 7 4.8"><path d="M1 1 L3.5 3.8 L6 1" fill="none" stroke="#424242" stroke-width="1.1"/></svg><svg class="a" style="left:1569px;top:87px;" width="31" height="31" viewBox="0 0 31 31"><circle cx="19.5" cy="11.3" r="10" fill="none" stroke="#333" stroke-width="1.2"/><line x1="12.5" y1="18.5" x2="1.3" y2="29.5" stroke="#333" stroke-width="1.2"/></svg><span class="t" style="left:1566.47px;top:122.00px;font-size:12.5px;color:#242424;transform:scaleX(1.0027);">Find &amp;</span><span class="t" style="left:1563.60px;top:138.00px;font-size:12.5px;color:#242424;transform:scaleX(0.8946);">Select</span><svg class="a" style="left:1598px;top:142.2px;" width="7.2" height="4.8" viewBox="0 0 7.2 4.8"><path d="M1 1 L3.6 3.8 L6.2 1" fill="none" stroke="#424242" stroke-width="1.1"/></svg><span class="t" style="left:1493.68px;top:162.00px;font-size:11.5px;color:#363636;transform:scaleX(1.0718);">Editing</span><div class="a" style="left:1616px;top:84px;width:1px;height:88px;background:#e0e0e0"></div><svg class="a" style="left:1633.5px;top:87.5px;" width="29" height="29" viewBox="0 0 29 29"><rect x="1" y="1" width="26.5" height="26.5" fill="#fdf0e6" stroke="#e3945a" stroke-width="1.3"/><g fill="#fff" stroke="#e3945a" stroke-width="1.2"><rect x="4" y="4" width="9" height="9"/><rect x="15.5" y="4" width="9" height="9"/><rect x="4" y="15.5" width="9" height="9"/><rect x="15.5" y="15.5" width="9" height="9"/></g></svg><span class="t" style="left:1627.47px;top:122.00px;font-size:12.5px;color:#242424;transform:scaleX(0.9831);">Add-ins</span><span class="t" style="left:1628.17px;top:163.00px;font-size:11.5px;color:#363636;transform:scaleX(1.0168);">Add-ins</span><div class="a" style="left:1679px;top:84px;width:1px;height:88px;background:#e0e0e0"></div><svg class="a" style="left:1695px;top:86px;" width="32" height="32" viewBox="0 0 32 32"><rect x="1" y="1" width="30" height="30" fill="#f5f5f5" stroke="#333" stroke-width="1.3"/><rect x="1.5" y="1.5" width="29" height="4" fill="#9a9a9a"/><g stroke="#bdbdbd" stroke-width="1"><path d="M1 12 H31 M1 19 H31 M1 26 H31 M11 5 V31 M21 5 V31"/></g><circle cx="14" cy="13" r="9" fill="#fff" stroke="#333" stroke-width="1.2"/><path d="M20.5 19.5 L31 30" stroke="#333" stroke-width="1.2"/><rect x="9.5" y="11" width="3" height="6" fill="#b0b0b0"/><rect x="12.5" y="7.5" width="3" height="9.5" fill="#9a9a9a"/><rect x="15.5" y="9.5" width="3" height="7.5" fill="#5ba4e0"/></svg><span class="t" style="left:1690.27px;top:122.00px;font-size:12.5px;color:#242424;transform:scaleX(0.9270);">Analyze</span><span class="t" style="left:1698.36px;top:137.00px;font-size:12.5px;color:#242424;transform:scaleX(0.9103);">Data</span><div class="a" style="left:1741px;top:84px;width:1px;height:88px;background:#e0e0e0"></div><svg class="a" style="left:1830.7px;top:162px;" width="11.9" height="7.2" viewBox="0 0 11.9 7.2"><path d="M1 1 L5.95 6.2 L10.9 1" fill="none" stroke="#333" stroke-width="1.2"/></svg><div class="a" style="left:9px;top:187px;width:102px;height:26px;background:#fff;border:1px solid #d9d9d9;border-radius:4px;box-sizing:border-box"></div><span class="t" style="left:16.07px;top:193.00px;font-size:13px;color:#242424;transform:scaleX(0.9119);">A1</span><svg class="a" style="left:94px;top:198px;" width="12" height="8" viewBox="0 0 12 8"><path d="M1 1.2 L5.5 5.8 L10 1.2" fill="none" stroke="#333" stroke-width="1.3"/></svg><div class="a" style="left:120px;top:195.5px;width:2.6px;height:2.4px;background:#333;border-radius:0.5px"></div><div class="a" style="left:120px;top:199.2px;width:2.6px;height:2.4px;background:#333;border-radius:0.5px"></div><div class="a" style="left:120px;top:203px;width:2.6px;height:2.4px;background:#333;border-radius:0.5px"></div><div class="a" style="left:131px;top:187px;width:74px;height:26px;background:#fff;border:1px solid #d9d9d9;border-radius:4px;box-sizing:border-box"></div><svg class="a" style="left:137px;top:193px;" width="15" height="15" viewBox="0 0 15 15"><path d="M1 1 L13 13 M13 1 L1 13" stroke="#c4c4c4" stroke-width="1.1"/></svg><svg class="a" style="left:159px;top:193px;" width="18" height="13" viewBox="0 0 18 13"><path d="M1 6 L6 11 L16.5 1" fill="none" stroke="#c4c4c4" stroke-width="1.1"/></svg><svg class="a" style="left:183px;top:190px;" width="18" height="20" viewBox="0 0 18 20"><g fill="none" stroke="#262626" stroke-linecap="round"><path d="M13.4 3.4 C12.8 2.3 11 2.1 10 3.6 C9.1 5 8.4 9.6 7.6 13.4 C6.8 17.2 5.7 18.4 3.2 17.6" stroke-width="1.5"/><path d="M6.4 7.6 H11.4" stroke-width="1.2"/><path d="M10.2 8.2 C11.6 7.6 12.2 8.4 12.7 10.4 L13.5 13.2 C13.9 14.8 14.8 15.3 16 14.4" stroke-width="1.3"/><path d="M16.2 8.4 C15.2 7.8 14.4 8.4 13 10.6 L11.2 13.4 C10.6 14.4 10 14.8 9.4 14.4" stroke-width="1.3"/></g></svg><div class="a" style="left:209px;top:187px;width:1642px;height:66px;background:#fff;border:1px solid #d9d9d9;border-radius:4px;box-sizing:border-box"></div><span class="t" style="left:220.20px;top:193.00px;font-size:13.5px;color:#242424;transform:scaleX(1.0746);">sn</span><svg class="a" style="left:1836px;top:194px;" width="12" height="8" viewBox="0 0 12 8"><path d="M1 6.2 L5.5 1.5 L10 6.2" fill="none" stroke="#333" stroke-width="1.3"/></svg><div class="a" style="left:1px;top:260px;width:1836px;height:20px;background:#f0f0f0"></div><div class="a" style="left:26px;top:260px;width:64px;height:19px;background:#d4d4d4"></div><div class="a" style="left:1px;top:279px;width:25px;height:663px;background:#f0f0f0"></div><div class="a" style="left:1px;top:280px;width:25px;height:19px;background:#d4d4d4"></div><svg class="a" style="left:11px;top:264px;" width="13" height="13" viewBox="0 0 13 13"><path d="M12.5 0.5 V12.5 H0.5 Z" fill="#c2c2c2"/></svg><div class="a" style="left:27px;top:280px;width:1810px;height:662px;background:#fff"></div><div class="a" style="left:90px;top:260px;width:1px;height:19px;background:#c8c8c8"></div><div class="a" style="left:154px;top:260px;width:1px;height:19px;background:#c8c8c8"></div><div class="a" style="left:218px;top:260px;width:1px;height:19px;background:#c8c8c8"></div><div class="a" style="left:282px;top:260px;width:1px;height:19px;background:#c8c8c8"></div><div class="a" style="left:346px;top:260px;width:1px;height:19px;background:#c8c8c8"></div><div class="a" style="left:410px;top:260px;width:1px;height:19px;background:#c8c8c8"></div><div class="a" style="left:474px;top:260px;width:1px;height:19px;background:#c8c8c8"></div><div class="a" style="left:538px;top:260px;width:1px;height:19px;background:#c8c8c8"></div><div class="a" style="left:602px;top:260px;width:1px;height:19px;background:#c8c8c8"></div><div class="a" style="left:666px;top:260px;width:1px;height:19px;background:#c8c8c8"></div><div class="a" style="left:730px;top:260px;width:1px;height:19px;background:#c8c8c8"></div><div class="a" style="left:794px;top:260px;width:1px;height:19px;background:#c8c8c8"></div><div class="a" style="left:858px;top:260px;width:1px;height:19px;background:#c8c8c8"></div><div class="a" style="left:922px;top:260px;width:1px;height:19px;background:#c8c8c8"></div><div class="a" style="left:986px;top:260px;width:1px;height:19px;background:#c8c8c8"></div><div class="a" style="left:1050px;top:260px;width:1px;height:19px;background:#c8c8c8"></div><div class="a" style="left:1114px;top:260px;width:1px;height:19px;background:#c8c8c8"></div><div class="a" style="left:1178px;top:260px;width:1px;height:19px;background:#c8c8c8"></div><div class="a" style="left:1242px;top:260px;width:1px;height:19px;background:#c8c8c8"></div><div class="a" style="left:1306px;top:260px;width:1px;height:19px;background:#c8c8c8"></div><div class="a" style="left:1370px;top:260px;width:1px;height:19px;background:#c8c8c8"></div><div class="a" style="left:1434px;top:260px;width:1px;height:19px;background:#c8c8c8"></div><div class="a" style="left:1498px;top:260px;width:1px;height:19px;background:#c8c8c8"></div><div class="a" style="left:1562px;top:260px;width:1px;height:19px;background:#c8c8c8"></div><div class="a" style="left:1626px;top:260px;width:1px;height:19px;background:#c8c8c8"></div><div class="a" style="left:1690px;top:260px;width:1px;height:19px;background:#c8c8c8"></div><div class="a" style="left:1754px;top:260px;width:1px;height:19px;background:#c8c8c8"></div><div class="a" style="left:1818px;top:260px;width:1px;height:19px;background:#c8c8c8"></div><div class="a" style="left:1px;top:279px;width:1836px;height:1px;background:#bdbdbd"></div><div class="a" style="left:26px;top:260px;width:1px;height:682px;background:#bdbdbd"></div><span class="t" style="left:54.33px;top:263.00px;font-size:12.5px;color:#1d6b41;">A</span><span class="t" style="left:118.14px;top:263.00px;font-size:12.5px;color:#363636;">B</span><span class="t" style="left:181.91px;top:263.00px;font-size:12.5px;color:#363636;">C</span><span class="t" style="left:245.77px;top:263.00px;font-size:12.5px;color:#363636;">D</span><span class="t" style="left:310.08px;top:263.00px;font-size:12.5px;color:#363636;">E</span><span class="t" style="left:374.42px;top:263.00px;font-size:12.5px;color:#363636;">F</span><span class="t" style="left:437.80px;top:263.00px;font-size:12.5px;color:#363636;">G</span><span class="t" style="left:501.98px;top:263.00px;font-size:12.5px;color:#363636;">H</span><span class="t" style="left:568.77px;top:263.00px;font-size:12.5px;color:#363636;">I</span><span class="t" style="left:631.75px;top:263.00px;font-size:12.5px;color:#363636;">J</span><span class="t" style="left:693.89px;top:263.00px;font-size:12.5px;color:#363636;">K</span><span class="t" style="left:758.72px;top:263.00px;font-size:12.5px;color:#363636;">L</span><span class="t" style="left:821.30px;top:263.00px;font-size:12.5px;color:#363636;">M</span><span class="t" style="left:885.98px;top:263.00px;font-size:12.5px;color:#363636;">N</span><span class="t" style="left:949.64px;top:263.00px;font-size:12.5px;color:#363636;">O</span><span class="t" style="left:1014.14px;top:263.00px;font-size:12.5px;color:#363636;">P</span><span class="t" style="left:1077.64px;top:263.00px;font-size:12.5px;color:#363636;">Q</span><span class="t" style="left:1141.77px;top:263.00px;font-size:12.5px;color:#363636;">R</span><span class="t" style="left:1206.33px;top:263.00px;font-size:12.5px;color:#363636;">S</span><span class="t" style="left:1270.69px;top:263.00px;font-size:12.5px;color:#363636;">T</span><span class="t" style="left:1333.98px;top:263.00px;font-size:12.5px;color:#363636;">U</span><span class="t" style="left:1398.33px;top:263.00px;font-size:12.5px;color:#363636;">V</span><span class="t" style="left:1460.59px;top:263.00px;font-size:12.5px;color:#363636;">W</span><span class="t" style="left:1526.33px;top:263.00px;font-size:12.5px;color:#363636;">X</span><span class="t" style="left:1590.33px;top:263.00px;font-size:12.5px;color:#363636;">Y</span><span class="t" style="left:1654.67px;top:263.00px;font-size:12.5px;color:#363636;">Z</span><span class="t" style="left:1714.16px;top:263.00px;font-size:12.5px;color:#363636;">AA</span><span class="t" style="left:1778.47px;top:263.00px;font-size:12.5px;color:#363636;">AB</span><div class="a" style="left:27px;top:299px;width:1810px;height:1px;background:#e1e1e1"></div><div class="a" style="left:1px;top:299px;width:25px;height:1px;background:#c8c8c8"></div><div class="a" style="left:27px;top:319px;width:1810px;height:1px;background:#e1e1e1"></div><div class="a" style="left:1px;top:319px;width:25px;height:1px;background:#c8c8c8"></div><div class="a" style="left:27px;top:339px;width:1810px;height:1px;background:#e1e1e1"></div><div class="a" style="left:1px;top:339px;width:25px;height:1px;background:#c8c8c8"></div><div class="a" style="left:27px;top:359px;width:1810px;height:1px;background:#e1e1e1"></div><div class="a" style="left:1px;top:359px;width:25px;height:1px;background:#c8c8c8"></div><div class="a" style="left:27px;top:379px;width:1810px;height:1px;background:#e1e1e1"></div><div class="a" style="left:1px;top:379px;width:25px;height:1px;background:#c8c8c8"></div><div class="a" style="left:27px;top:399px;width:1810px;height:1px;background:#e1e1e1"></div><div class="a" style="left:1px;top:399px;width:25px;height:1px;background:#c8c8c8"></div><div class="a" style="left:27px;top:419px;width:1810px;height:1px;background:#e1e1e1"></div><div class="a" style="left:1px;top:419px;width:25px;height:1px;background:#c8c8c8"></div><div class="a" style="left:27px;top:439px;width:1810px;height:1px;background:#e1e1e1"></div><div class="a" style="left:1px;top:439px;width:25px;height:1px;background:#c8c8c8"></div><div class="a" style="left:27px;top:459px;width:1810px;height:1px;background:#e1e1e1"></div><div class="a" style="left:1px;top:459px;width:25px;height:1px;background:#c8c8c8"></div><div class="a" style="left:27px;top:479px;width:1810px;height:1px;background:#e1e1e1"></div><div class="a" style="left:1px;top:479px;width:25px;height:1px;background:#c8c8c8"></div><div class="a" style="left:27px;top:499px;width:1810px;height:1px;background:#e1e1e1"></div><div class="a" style="left:1px;top:499px;width:25px;height:1px;background:#c8c8c8"></div><div class="a" style="left:27px;top:519px;width:1810px;height:1px;background:#e1e1e1"></div><div class="a" style="left:1px;top:519px;width:25px;height:1px;background:#c8c8c8"></div><div class="a" style="left:27px;top:539px;width:1810px;height:1px;background:#e1e1e1"></div><div class="a" style="left:1px;top:539px;width:25px;height:1px;background:#c8c8c8"></div><div class="a" style="left:27px;top:559px;width:1810px;height:1px;background:#e1e1e1"></div><div class="a" style="left:1px;top:559px;width:25px;height:1px;background:#c8c8c8"></div><div class="a" style="left:27px;top:579px;width:1810px;height:1px;background:#e1e1e1"></div><div class="a" style="left:1px;top:579px;width:25px;height:1px;background:#c8c8c8"></div><div class="a" style="left:27px;top:599px;width:1810px;height:1px;background:#e1e1e1"></div><div class="a" style="left:1px;top:599px;width:25px;height:1px;background:#c8c8c8"></div><div class="a" style="left:27px;top:619px;width:1810px;height:1px;background:#e1e1e1"></div><div class="a" style="left:1px;top:619px;width:25px;height:1px;background:#c8c8c8"></div><div class="a" style="left:27px;top:639px;width:1810px;height:1px;background:#e1e1e1"></div><div class="a" style="left:1px;top:639px;width:25px;height:1px;background:#c8c8c8"></div><div class="a" style="left:27px;top:659px;width:1810px;height:1px;background:#e1e1e1"></div><div class="a" style="left:1px;top:659px;width:25px;height:1px;background:#c8c8c8"></div><div class="a" style="left:27px;top:679px;width:1810px;height:1px;background:#e1e1e1"></div><div class="a" style="left:1px;top:679px;width:25px;height:1px;background:#c8c8c8"></div><div class="a" style="left:27px;top:699px;width:1810px;height:1px;background:#e1e1e1"></div><div class="a" style="left:1px;top:699px;width:25px;height:1px;background:#c8c8c8"></div><div class="a" style="left:27px;top:719px;width:1810px;height:1px;background:#e1e1e1"></div><div class="a" style="left:1px;top:719px;width:25px;height:1px;background:#c8c8c8"></div><div class="a" style="left:27px;top:739px;width:1810px;height:1px;background:#e1e1e1"></div><div class="a" style="left:1px;top:739px;width:25px;height:1px;background:#c8c8c8"></div><div class="a" style="left:27px;top:759px;width:1810px;height:1px;background:#e1e1e1"></div><div class="a" style="left:1px;top:759px;width:25px;height:1px;background:#c8c8c8"></div><div class="a" style="left:27px;top:779px;width:1810px;height:1px;background:#e1e1e1"></div><div class="a" style="left:1px;top:779px;width:25px;height:1px;background:#c8c8c8"></div><div class="a" style="left:27px;top:799px;width:1810px;height:1px;background:#e1e1e1"></div><div class="a" style="left:1px;top:799px;width:25px;height:1px;background:#c8c8c8"></div><div class="a" style="left:27px;top:819px;width:1810px;height:1px;background:#e1e1e1"></div><div class="a" style="left:1px;top:819px;width:25px;height:1px;background:#c8c8c8"></div><div class="a" style="left:27px;top:839px;width:1810px;height:1px;background:#e1e1e1"></div><div class="a" style="left:1px;top:839px;width:25px;height:1px;background:#c8c8c8"></div><div class="a" style="left:27px;top:859px;width:1810px;height:1px;background:#e1e1e1"></div><div class="a" style="left:1px;top:859px;width:25px;height:1px;background:#c8c8c8"></div><div class="a" style="left:27px;top:879px;width:1810px;height:1px;background:#e1e1e1"></div><div class="a" style="left:1px;top:879px;width:25px;height:1px;background:#c8c8c8"></div><div class="a" style="left:27px;top:899px;width:1810px;height:1px;background:#e1e1e1"></div><div class="a" style="left:1px;top:899px;width:25px;height:1px;background:#c8c8c8"></div><div class="a" style="left:27px;top:919px;width:1810px;height:1px;background:#e1e1e1"></div><div class="a" style="left:1px;top:919px;width:25px;height:1px;background:#c8c8c8"></div><div class="a" style="left:27px;top:939px;width:1810px;height:1px;background:#e1e1e1"></div><div class="a" style="left:1px;top:939px;width:25px;height:1px;background:#c8c8c8"></div><div class="a" style="left:90px;top:280px;width:1px;height:662px;background:#e1e1e1"></div><div class="a" style="left:154px;top:280px;width:1px;height:662px;background:#e1e1e1"></div><div class="a" style="left:218px;top:280px;width:1px;height:662px;background:#e1e1e1"></div><div class="a" style="left:282px;top:280px;width:1px;height:662px;background:#e1e1e1"></div><div class="a" style="left:346px;top:280px;width:1px;height:662px;background:#e1e1e1"></div><div class="a" style="left:410px;top:280px;width:1px;height:662px;background:#e1e1e1"></div><div class="a" style="left:474px;top:280px;width:1px;height:662px;background:#e1e1e1"></div><div class="a" style="left:538px;top:280px;width:1px;height:662px;background:#e1e1e1"></div><div class="a" style="left:602px;top:280px;width:1px;height:662px;background:#e1e1e1"></div><div class="a" style="left:666px;top:280px;width:1px;height:662px;background:#e1e1e1"></div><div class="a" style="left:730px;top:280px;width:1px;height:662px;background:#e1e1e1"></div><div class="a" style="left:794px;top:280px;width:1px;height:662px;background:#e1e1e1"></div><div class="a" style="left:858px;top:280px;width:1px;height:662px;background:#e1e1e1"></div><div class="a" style="left:922px;top:280px;width:1px;height:662px;background:#e1e1e1"></div><div class="a" style="left:986px;top:280px;width:1px;height:662px;background:#e1e1e1"></div><div class="a" style="left:1050px;top:280px;width:1px;height:662px;background:#e1e1e1"></div><div class="a" style="left:1114px;top:280px;width:1px;height:662px;background:#e1e1e1"></div><div class="a" style="left:1178px;top:280px;width:1px;height:662px;background:#e1e1e1"></div><div class="a" style="left:1242px;top:280px;width:1px;height:662px;background:#e1e1e1"></div><div class="a" style="left:1306px;top:280px;width:1px;height:662px;background:#e1e1e1"></div><div class="a" style="left:1370px;top:280px;width:1px;height:662px;background:#e1e1e1"></div><div class="a" style="left:1434px;top:280px;width:1px;height:662px;background:#e1e1e1"></div><div class="a" style="left:1498px;top:280px;width:1px;height:662px;background:#e1e1e1"></div><div class="a" style="left:1562px;top:280px;width:1px;height:662px;background:#e1e1e1"></div><div class="a" style="left:1626px;top:280px;width:1px;height:662px;background:#e1e1e1"></div><div class="a" style="left:1690px;top:280px;width:1px;height:662px;background:#e1e1e1"></div><div class="a" style="left:1754px;top:280px;width:1px;height:662px;background:#e1e1e1"></div><div class="a" style="left:1818px;top:280px;width:1px;height:662px;background:#e1e1e1"></div><span class="t" style="left:10.72px;top:283.00px;font-size:13px;color:#1d6b41;transform:scaleX(0.9200);">1</span><span class="t" style="left:10.88px;top:303.00px;font-size:13px;color:#363636;transform:scaleX(0.9200);">2</span><span class="t" style="left:10.91px;top:323.00px;font-size:13px;color:#363636;transform:scaleX(0.9200);">3</span><span class="t" style="left:10.91px;top:343.00px;font-size:13px;color:#363636;transform:scaleX(0.9200);">4</span><span class="t" style="left:10.88px;top:363.00px;font-size:13px;color:#363636;transform:scaleX(0.9200);">5</span><span class="t" style="left:10.84px;top:383.00px;font-size:13px;color:#363636;transform:scaleX(0.9200);">6</span><span class="t" style="left:10.88px;top:403.00px;font-size:13px;color:#363636;transform:scaleX(0.9200);">7</span><span class="t" style="left:10.88px;top:423.00px;font-size:13px;color:#363636;transform:scaleX(0.9200);">8</span><span class="t" style="left:10.87px;top:443.00px;font-size:13px;color:#363636;transform:scaleX(0.9200);">9</span><span class="t" style="left:7.34px;top:463.00px;font-size:13px;color:#363636;transform:scaleX(0.9200);">10</span><span class="t" style="left:7.83px;top:483.00px;font-size:13px;color:#363636;transform:scaleX(0.9200);">11</span><span class="t" style="left:7.41px;top:503.00px;font-size:13px;color:#363636;transform:scaleX(0.9200);">12</span><span class="t" style="left:7.37px;top:523.00px;font-size:13px;color:#363636;transform:scaleX(0.9200);">13</span><span class="t" style="left:7.28px;top:543.00px;font-size:13px;color:#363636;transform:scaleX(0.9200);">14</span><span class="t" style="left:7.35px;top:563.00px;font-size:13px;color:#363636;transform:scaleX(0.9200);">15</span><span class="t" style="left:7.37px;top:583.00px;font-size:13px;color:#363636;transform:scaleX(0.9200);">16</span><span class="t" style="left:7.41px;top:603.00px;font-size:13px;color:#363636;transform:scaleX(0.9200);">17</span><span class="t" style="left:7.37px;top:623.00px;font-size:13px;color:#363636;transform:scaleX(0.9200);">18</span><span class="t" style="left:7.38px;top:643.00px;font-size:13px;color:#363636;transform:scaleX(0.9200);">19</span><span class="t" style="left:7.49px;top:663.00px;font-size:13px;color:#363636;transform:scaleX(0.9200);">20</span><span class="t" style="left:7.55px;top:683.00px;font-size:13px;color:#363636;transform:scaleX(0.9200);">21</span><span class="t" style="left:7.56px;top:703.00px;font-size:13px;color:#363636;transform:scaleX(0.9200);">22</span><span class="t" style="left:7.52px;top:723.00px;font-size:13px;color:#363636;transform:scaleX(0.9200);">23</span><span class="t" style="left:7.43px;top:743.00px;font-size:13px;color:#363636;transform:scaleX(0.9200);">24</span><span class="t" style="left:7.50px;top:763.00px;font-size:13px;color:#363636;transform:scaleX(0.9200);">25</span><span class="t" style="left:7.52px;top:783.00px;font-size:13px;color:#363636;transform:scaleX(0.9200);">26</span><span class="t" style="left:7.56px;top:803.00px;font-size:13px;color:#363636;transform:scaleX(0.9200);">27</span><span class="t" style="left:7.52px;top:823.00px;font-size:13px;color:#363636;transform:scaleX(0.9200);">28</span><span class="t" style="left:7.53px;top:843.00px;font-size:13px;color:#363636;transform:scaleX(0.9200);">29</span><span class="t" style="left:7.56px;top:863.00px;font-size:13px;color:#363636;transform:scaleX(0.9200);">30</span><span class="t" style="left:7.62px;top:883.00px;font-size:13px;color:#363636;transform:scaleX(0.9200);">31</span><span class="t" style="left:7.64px;top:903.00px;font-size:13px;color:#363636;transform:scaleX(0.9200);">32</span><span class="t" style="left:7.59px;top:923.00px;font-size:13px;color:#363636;transform:scaleX(0.9200);">33</span><div class="c l" style="left:27px;top:280px;width:64.95px;transform:scaleX(0.97);">sn</div><div class="c l" style="left:91px;top:280px;width:64.95px;transform:scaleX(0.97);">time</div><div class="c l" style="left:155px;top:280px;width:64.95px;transform:scaleX(0.97);">MasterState</div><div class="c l" style="left:219px;top:280px;width:64.95px;transform:scaleX(0.97);">OperatingState</div><div class="c l" style="left:283px;top:280px;width:64.95px;transform:scaleX(0.97);">YieldToday</div><div class="c l" style="left:347px;top:280px;width:64.95px;transform:scaleX(0.97);">YieldTotal</div><div class="c l" style="left:411px;top:280px;width:64.95px;transform:scaleX(0.97);">InputEnergy</div><div class="c l" style="left:475px;top:280px;width:64.95px;transform:scaleX(0.97);">MeterPower</div><div class="c l" style="left:539px;top:280px;width:64.95px;transform:scaleX(0.97);">Meter2Power</div><div class="c l" style="left:603px;top:280px;width:64.95px;transform:scaleX(0.97);">InvPower(W)</div><div class="c l" style="left:667px;top:280px;width:64.95px;transform:scaleX(0.97);">Loadspower</div><div class="c l" style="left:731px;top:280px;width:64.95px;transform:scaleX(0.97);">ProtocolVersion</div><div class="c l" style="left:795px;top:280px;width:64.95px;transform:scaleX(0.97);">GirdVoltage</div><div class="c l" style="left:859px;top:280px;width:64.95px;transform:scaleX(0.97);">GridCurrent</div><div class="c l" style="left:923px;top:280px;width:64.95px;transform:scaleX(0.97);">GridFrequency</div><div class="c l" style="left:987px;top:280px;width:64.95px;transform:scaleX(0.97);">CurrentRF</div><div class="c l" style="left:1051px;top:280px;width:64.95px;transform:scaleX(0.97);">Pv1Voltage</div><div class="c l" style="left:1115px;top:280px;width:64.95px;transform:scaleX(0.97);">Pv1Current</div><div class="c l" style="left:1179px;top:280px;width:64.95px;transform:scaleX(0.97);">Pv2Voltage</div><div class="c l" style="left:1243px;top:280px;width:64.95px;transform:scaleX(0.97);">Pv2Current</div><div class="c l" style="left:1307px;top:280px;width:64.95px;transform:scaleX(0.97);">InvTemperature</div><div class="c l" style="left:1371px;top:280px;width:64.95px;transform:scaleX(0.97);">AmbientTemp</div><div class="c l" style="left:1435px;top:280px;width:64.95px;transform:scaleX(0.97);">EpsVoltage</div><div class="c l" style="left:1499px;top:280px;width:64.95px;transform:scaleX(0.97);">EpsCurrent</div><div class="c l" style="left:1563px;top:280px;width:64.95px;transform:scaleX(0.97);">EpsFrequency</div><div class="c l" style="left:1627px;top:280px;width:64.95px;transform:scaleX(0.97);">EpsPower</div><div class="c l" style="left:1691px;top:280px;width:64.95px;transform:scaleX(0.97);">InvBatVolt</div><div class="c l" style="left:1755px;top:280px;width:64.95px;transform:scaleX(0.97);">InvBatCurrent</div><div class="c l" style="left:1819px;top:280px;width:18.56px;transform:scaleX(0.97);">InvBatPower</div><div class="c l" style="left:27px;top:300px;width:71.59px;transform:scaleX(0.88);">60BH6020:</div><div class="c l" style="left:91px;top:300px;">2024-03-14 00:00:00</div><div class="c r" style="left:150.26px;top:300px;">2</div><div class="c r" style="left:214.26px;top:300px;">1</div><div class="c r" style="left:342.26px;top:300px;">5665.6</div><div class="c r" style="left:470.26px;top:300px;">7.758</div><div class="c r" style="left:534.26px;top:300px;">0</div><div class="c r" style="left:598.26px;top:300px;">-4.456</div><div class="c r" style="left:662.26px;top:300px;">3.305</div><div class="c l" style="left:731px;top:300px;">H11500</div><div class="c r" style="left:790.26px;top:300px;">245.7</div><div class="c r" style="left:854.26px;top:300px;">18.1</div><div class="c r" style="left:918.26px;top:300px;">49.97</div><div class="c r" style="left:982.26px;top:300px;">-4.456</div><div class="c r" style="left:1046.26px;top:300px;">5.4</div><div class="c r" style="left:1110.26px;top:300px;">0</div><div class="c r" style="left:1174.26px;top:300px;">2.7</div><div class="c r" style="left:1238.26px;top:300px;">0</div><div class="c r" style="left:1302.26px;top:300px;">37.3</div><div class="c r" style="left:1366.26px;top:300px;">40.5</div><div class="c r" style="left:1430.26px;top:300px;">0</div><div class="c r" style="left:1494.26px;top:300px;">0</div><div class="c r" style="left:1558.26px;top:300px;">0</div><div class="c r" style="left:1622.26px;top:300px;">0</div><div class="c r" style="left:1686.26px;top:300px;">430.3</div><div class="c r" style="left:1750.26px;top:300px;">-10</div><div class="c l" style="left:27px;top:320px;width:71.59px;transform:scaleX(0.88);">60BH6020:</div><div class="c l" style="left:91px;top:320px;">2024-03-14 00:00:00</div><div class="c r" style="left:150.26px;top:320px;">2</div><div class="c r" style="left:214.26px;top:320px;">1</div><div class="c r" style="left:342.26px;top:320px;">5665.6</div><div class="c r" style="left:470.26px;top:320px;">7.263</div><div class="c r" style="left:534.26px;top:320px;">0</div><div class="c r" style="left:598.26px;top:320px;">-4.456</div><div class="c r" style="left:662.26px;top:320px;">2.807</div><div class="c l" style="left:731px;top:320px;">H11500</div><div class="c r" style="left:790.26px;top:320px;">243.7</div><div class="c r" style="left:854.26px;top:320px;">18.2</div><div class="c r" style="left:918.26px;top:320px;">49.93</div><div class="c r" style="left:982.26px;top:320px;">-4.456</div><div class="c r" style="left:1046.26px;top:320px;">5.2</div><div class="c r" style="left:1110.26px;top:320px;">0</div><div class="c r" style="left:1174.26px;top:320px;">2.7</div><div class="c r" style="left:1238.26px;top:320px;">0</div><div class="c r" style="left:1302.26px;top:320px;">37.1</div><div class="c r" style="left:1366.26px;top:320px;">41.1</div><div class="c r" style="left:1430.26px;top:320px;">0</div><div class="c r" style="left:1494.26px;top:320px;">0</div><div class="c r" style="left:1558.26px;top:320px;">0</div><div class="c r" style="left:1622.26px;top:320px;">0</div><div class="c r" style="left:1686.26px;top:320px;">430.4</div><div class="c r" style="left:1750.26px;top:320px;">-10</div><div class="c l" style="left:27px;top:340px;width:71.59px;transform:scaleX(0.88);">60BH6020:</div><div class="c l" style="left:91px;top:340px;">2024-03-14 00:00:00</div><div class="c r" style="left:150.26px;top:340px;">2</div><div class="c r" style="left:214.26px;top:340px;">1</div><div class="c r" style="left:342.26px;top:340px;">5665.6</div><div class="c r" style="left:470.26px;top:340px;">7.224</div><div class="c r" style="left:534.26px;top:340px;">0</div><div class="c r" style="left:598.26px;top:340px;">-4.47</div><div class="c r" style="left:662.26px;top:340px;">2.752</div><div class="c l" style="left:731px;top:340px;">H11500</div><div class="c r" style="left:790.26px;top:340px;">243.8</div><div class="c r" style="left:854.26px;top:340px;">18.3</div><div class="c r" style="left:918.26px;top:340px;">49.94</div><div class="c r" style="left:982.26px;top:340px;">-4.47</div><div class="c r" style="left:1046.26px;top:340px;">5.1</div><div class="c r" style="left:1110.26px;top:340px;">0</div><div class="c r" style="left:1174.26px;top:340px;">2.7</div><div class="c r" style="left:1238.26px;top:340px;">0</div><div class="c r" style="left:1302.26px;top:340px;">37.8</div><div class="c r" style="left:1366.26px;top:340px;">41.7</div><div class="c r" style="left:1430.26px;top:340px;">0</div><div class="c r" style="left:1494.26px;top:340px;">0</div><div class="c r" style="left:1558.26px;top:340px;">0</div><div class="c r" style="left:1622.26px;top:340px;">0</div><div class="c r" style="left:1686.26px;top:340px;">430.6</div><div class="c r" style="left:1750.26px;top:340px;">-10</div><div class="c l" style="left:27px;top:360px;width:71.59px;transform:scaleX(0.88);">60BH6020:</div><div class="c l" style="left:91px;top:360px;">2024-03-14 00:00:00</div><div class="c r" style="left:150.26px;top:360px;">2</div><div class="c r" style="left:214.26px;top:360px;">1</div><div class="c r" style="left:342.26px;top:360px;">5665.6</div><div class="c r" style="left:470.26px;top:360px;">6.802</div><div class="c r" style="left:534.26px;top:360px;">0</div><div class="c r" style="left:598.26px;top:360px;">-4.028</div><div class="c r" style="left:662.26px;top:360px;">2.779</div><div class="c l" style="left:731px;top:360px;">H11500</div><div class="c r" style="left:790.26px;top:360px;">245.9</div><div class="c r" style="left:854.26px;top:360px;">16.4</div><div class="c r" style="left:918.26px;top:360px;">49.98</div><div class="c r" style="left:982.26px;top:360px;">-4.028</div><div class="c r" style="left:1046.26px;top:360px;">5.2</div><div class="c r" style="left:1110.26px;top:360px;">0</div><div class="c r" style="left:1174.26px;top:360px;">2.7</div><div class="c r" style="left:1238.26px;top:360px;">0</div><div class="c r" style="left:1302.26px;top:360px;">38.6</div><div class="c r" style="left:1366.26px;top:360px;">42.1</div><div class="c r" style="left:1430.26px;top:360px;">0</div><div class="c r" style="left:1494.26px;top:360px;">0</div><div class="c r" style="left:1558.26px;top:360px;">0</div><div class="c r" style="left:1622.26px;top:360px;">0</div><div class="c r" style="left:1686.26px;top:360px;">430.4</div><div class="c r" style="left:1750.26px;top:360px;">-8.9</div><div class="c l" style="left:27px;top:380px;width:71.59px;transform:scaleX(0.88);">60BH6020:</div><div class="c l" style="left:91px;top:380px;">2024-03-14 00:00:00</div><div class="c r" style="left:150.26px;top:380px;">2</div><div class="c r" style="left:214.26px;top:380px;">1</div><div class="c r" style="left:342.26px;top:380px;">5665.6</div><div class="c r" style="left:470.26px;top:380px;">6.869</div><div class="c r" style="left:534.26px;top:380px;">0</div><div class="c r" style="left:598.26px;top:380px;">-4.025</div><div class="c r" style="left:662.26px;top:380px;">2.846</div><div class="c l" style="left:731px;top:380px;">H11500</div><div class="c r" style="left:790.26px;top:380px;">247.3</div><div class="c r" style="left:854.26px;top:380px;">16.3</div><div class="c r" style="left:918.26px;top:380px;">50.03</div><div class="c r" style="left:982.26px;top:380px;">-4.025</div><div class="c r" style="left:1046.26px;top:380px;">5.3</div><div class="c r" style="left:1110.26px;top:380px;">0</div><div class="c r" style="left:1174.26px;top:380px;">2.7</div><div class="c r" style="left:1238.26px;top:380px;">0</div><div class="c r" style="left:1302.26px;top:380px;">38.1</div><div class="c r" style="left:1366.26px;top:380px;">42.5</div><div class="c r" style="left:1430.26px;top:380px;">0</div><div class="c r" style="left:1494.26px;top:380px;">0</div><div class="c r" style="left:1558.26px;top:380px;">0</div><div class="c r" style="left:1622.26px;top:380px;">0</div><div class="c r" style="left:1686.26px;top:380px;">430.6</div><div class="c r" style="left:1750.26px;top:380px;">-9</div><div class="c l" style="left:27px;top:400px;width:71.59px;transform:scaleX(0.88);">60BH6020:</div><div class="c l" style="left:91px;top:400px;">2024-03-14 00:00:00</div><div class="c r" style="left:150.26px;top:400px;">2</div><div class="c r" style="left:214.26px;top:400px;">1</div><div class="c r" style="left:342.26px;top:400px;">5665.6</div><div class="c r" style="left:470.26px;top:400px;">7.391</div><div class="c r" style="left:534.26px;top:400px;">0</div><div class="c r" style="left:598.26px;top:400px;">-4.038</div><div class="c r" style="left:662.26px;top:400px;">3.357</div><div class="c l" style="left:731px;top:400px;">H11500</div><div class="c r" style="left:790.26px;top:400px;">245.8</div><div class="c r" style="left:854.26px;top:400px;">16.4</div><div class="c r" style="left:918.26px;top:400px;">50.05</div><div class="c r" style="left:982.26px;top:400px;">-4.038</div><div class="c r" style="left:1046.26px;top:400px;">5.3</div><div class="c r" style="left:1110.26px;top:400px;">0</div><div class="c r" style="left:1174.26px;top:400px;">2.7</div><div class="c r" style="left:1238.26px;top:400px;">0</div><div class="c r" style="left:1302.26px;top:400px;">38.6</div><div class="c r" style="left:1366.26px;top:400px;">42.7</div><div class="c r" style="left:1430.26px;top:400px;">0</div><div class="c r" style="left:1494.26px;top:400px;">0</div><div class="c r" style="left:1558.26px;top:400px;">0</div><div class="c r" style="left:1622.26px;top:400px;">0</div><div class="c r" style="left:1686.26px;top:400px;">431</div><div class="c r" style="left:1750.26px;top:400px;">-8.9</div><div class="c l" style="left:27px;top:420px;width:71.59px;transform:scaleX(0.88);">60BH6020:</div><div class="c l" style="left:91px;top:420px;">2024-03-14 00:00:00</div><div class="c r" style="left:150.26px;top:420px;">2</div><div class="c r" style="left:214.26px;top:420px;">1</div><div class="c r" style="left:342.26px;top:420px;">5665.6</div><div class="c r" style="left:470.26px;top:420px;">4.561</div><div class="c r" style="left:534.26px;top:420px;">0</div><div class="c r" style="left:598.26px;top:420px;">-4.043</div><div class="c r" style="left:662.26px;top:420px;">0.522</div><div class="c l" style="left:731px;top:420px;">H11500</div><div class="c r" style="left:790.26px;top:420px;">248.2</div><div class="c r" style="left:854.26px;top:420px;">16.3</div><div class="c r" style="left:918.26px;top:420px;">49.9</div><div class="c r" style="left:982.26px;top:420px;">-4.043</div><div class="c r" style="left:1046.26px;top:420px;">5.2</div><div class="c r" style="left:1110.26px;top:420px;">0</div><div class="c r" style="left:1174.26px;top:420px;">2.7</div><div class="c r" style="left:1238.26px;top:420px;">0</div><div class="c r" style="left:1302.26px;top:420px;">38.6</div><div class="c r" style="left:1366.26px;top:420px;">43</div><div class="c r" style="left:1430.26px;top:420px;">0</div><div class="c r" style="left:1494.26px;top:420px;">0</div><div class="c r" style="left:1558.26px;top:420px;">0</div><div class="c r" style="left:1622.26px;top:420px;">0</div><div class="c r" style="left:1686.26px;top:420px;">431.4</div><div class="c r" style="left:1750.26px;top:420px;">-8.9</div><div class="c l" style="left:27px;top:440px;width:71.59px;transform:scaleX(0.88);">60BH6020:</div><div class="c l" style="left:91px;top:440px;">2024-03-14 00:00:00</div><div class="c r" style="left:150.26px;top:440px;">2</div><div class="c r" style="left:214.26px;top:440px;">1</div><div class="c r" style="left:342.26px;top:440px;">5665.6</div><div class="c r" style="left:470.26px;top:440px;">4.355</div><div class="c r" style="left:534.26px;top:440px;">0</div><div class="c r" style="left:598.26px;top:440px;">-4.049</div><div class="c r" style="left:662.26px;top:440px;">0.307</div><div class="c l" style="left:731px;top:440px;">H11500</div><div class="c r" style="left:790.26px;top:440px;">247.6</div><div class="c r" style="left:854.26px;top:440px;">16.3</div><div class="c r" style="left:918.26px;top:440px;">49.88</div><div class="c r" style="left:982.26px;top:440px;">-4.049</div><div class="c r" style="left:1046.26px;top:440px;">5.2</div><div class="c r" style="left:1110.26px;top:440px;">0</div><div class="c r" style="left:1174.26px;top:440px;">2.7</div><div class="c r" style="left:1238.26px;top:440px;">0</div><div class="c r" style="left:1302.26px;top:440px;">38.6</div><div class="c r" style="left:1366.26px;top:440px;">43.1</div><div class="c r" style="left:1430.26px;top:440px;">0</div><div class="c r" style="left:1494.26px;top:440px;">0</div><div class="c r" style="left:1558.26px;top:440px;">0</div><div class="c r" style="left:1622.26px;top:440px;">0</div><div class="c r" style="left:1686.26px;top:440px;">432</div><div class="c r" style="left:1750.26px;top:440px;">-8.9</div><div class="c l" style="left:27px;top:460px;width:71.59px;transform:scaleX(0.88);">60BH6020:</div><div class="c l" style="left:91px;top:460px;">2024-03-14 00:00:00</div><div class="c r" style="left:150.26px;top:460px;">2</div><div class="c r" style="left:214.26px;top:460px;">1</div><div class="c r" style="left:342.26px;top:460px;">5665.6</div><div class="c r" style="left:470.26px;top:460px;">4.573</div><div class="c r" style="left:534.26px;top:460px;">0</div><div class="c r" style="left:598.26px;top:460px;">-4.057</div><div class="c r" style="left:662.26px;top:460px;">0.521</div><div class="c l" style="left:731px;top:460px;">H11500</div><div class="c r" style="left:790.26px;top:460px;">247.2</div><div class="c r" style="left:854.26px;top:460px;">16.4</div><div class="c r" style="left:918.26px;top:460px;">49.92</div><div class="c r" style="left:982.26px;top:460px;">-4.057</div><div class="c r" style="left:1046.26px;top:460px;">5.2</div><div class="c r" style="left:1110.26px;top:460px;">0</div><div class="c r" style="left:1174.26px;top:460px;">2.7</div><div class="c r" style="left:1238.26px;top:460px;">0</div><div class="c r" style="left:1302.26px;top:460px;">38.8</div><div class="c r" style="left:1366.26px;top:460px;">43.2</div><div class="c r" style="left:1430.26px;top:460px;">0</div><div class="c r" style="left:1494.26px;top:460px;">0</div><div class="c r" style="left:1558.26px;top:460px;">0</div><div class="c r" style="left:1622.26px;top:460px;">0</div><div class="c r" style="left:1686.26px;top:460px;">432.7</div><div class="c r" style="left:1750.26px;top:460px;">-9</div><div class="c l" style="left:27px;top:480px;width:71.59px;transform:scaleX(0.88);">60BH6020:</div><div class="c l" style="left:91px;top:480px;">2024-03-14 00:00:00</div><div class="c r" style="left:150.26px;top:480px;">2</div><div class="c r" style="left:214.26px;top:480px;">1</div><div class="c r" style="left:342.26px;top:480px;">5665.6</div><div class="c r" style="left:470.26px;top:480px;">3.932</div><div class="c r" style="left:534.26px;top:480px;">0</div><div class="c r" style="left:598.26px;top:480px;">-3.605</div><div class="c r" style="left:662.26px;top:480px;">0.327</div><div class="c l" style="left:731px;top:480px;">H11500</div><div class="c r" style="left:790.26px;top:480px;">248.7</div><div class="c r" style="left:854.26px;top:480px;">14.5</div><div class="c r" style="left:918.26px;top:480px;">50.03</div><div class="c r" style="left:982.26px;top:480px;">-3.605</div><div class="c r" style="left:1046.26px;top:480px;">5.1</div><div class="c r" style="left:1110.26px;top:480px;">0</div><div class="c r" style="left:1174.26px;top:480px;">2.6</div><div class="c r" style="left:1238.26px;top:480px;">0</div><div class="c r" style="left:1302.26px;top:480px;">38.5</div><div class="c r" style="left:1366.26px;top:480px;">43.5</div><div class="c r" style="left:1430.26px;top:480px;">0</div><div class="c r" style="left:1494.26px;top:480px;">0</div><div class="c r" style="left:1558.26px;top:480px;">0</div><div class="c r" style="left:1622.26px;top:480px;">0</div><div class="c r" style="left:1686.26px;top:480px;">432.8</div><div class="c r" style="left:1750.26px;top:480px;">-8</div><div class="c l" style="left:27px;top:500px;width:71.59px;transform:scaleX(0.88);">60BH6020:</div><div class="c l" style="left:91px;top:500px;">2024-03-14 00:00:00</div><div class="c r" style="left:150.26px;top:500px;">2</div><div class="c r" style="left:214.26px;top:500px;">1</div><div class="c r" style="left:342.26px;top:500px;">5665.6</div><div class="c r" style="left:470.26px;top:500px;">4.403</div><div class="c r" style="left:534.26px;top:500px;">0</div><div class="c r" style="left:598.26px;top:500px;">-3.613</div><div class="c r" style="left:662.26px;top:500px;">0.789</div><div class="c l" style="left:731px;top:500px;">H11500</div><div class="c r" style="left:790.26px;top:500px;">248</div><div class="c r" style="left:854.26px;top:500px;">14.6</div><div class="c r" style="left:918.26px;top:500px;">49.97</div><div class="c r" style="left:982.26px;top:500px;">-3.613</div><div class="c r" style="left:1046.26px;top:500px;">5.2</div><div class="c r" style="left:1110.26px;top:500px;">0</div><div class="c r" style="left:1174.26px;top:500px;">2.6</div><div class="c r" style="left:1238.26px;top:500px;">0</div><div class="c r" style="left:1302.26px;top:500px;">38.5</div><div class="c r" style="left:1366.26px;top:500px;">43.5</div><div class="c r" style="left:1430.26px;top:500px;">0</div><div class="c r" style="left:1494.26px;top:500px;">0</div><div class="c r" style="left:1558.26px;top:500px;">0</div><div class="c r" style="left:1622.26px;top:500px;">0</div><div class="c r" style="left:1686.26px;top:500px;">433.1</div><div class="c r" style="left:1750.26px;top:500px;">-8</div><div class="c l" style="left:27px;top:520px;width:71.59px;transform:scaleX(0.88);">60BH6020:</div><div class="c l" style="left:91px;top:520px;">2024-03-14 00:00:00</div><div class="c r" style="left:150.26px;top:520px;">2</div><div class="c r" style="left:214.26px;top:520px;">1</div><div class="c r" style="left:342.26px;top:520px;">5665.6</div><div class="c r" style="left:470.26px;top:520px;">3.872</div><div class="c r" style="left:534.26px;top:520px;">0</div><div class="c r" style="left:598.26px;top:520px;">-3.611</div><div class="c r" style="left:662.26px;top:520px;">0.263</div><div class="c l" style="left:731px;top:520px;">H11500</div><div class="c r" style="left:790.26px;top:520px;">247.9</div><div class="c r" style="left:854.26px;top:520px;">14.6</div><div class="c r" style="left:918.26px;top:520px;">49.95</div><div class="c r" style="left:982.26px;top:520px;">-3.611</div><div class="c r" style="left:1046.26px;top:520px;">5.5</div><div class="c r" style="left:1110.26px;top:520px;">0</div><div class="c r" style="left:1174.26px;top:520px;">2.7</div><div class="c r" style="left:1238.26px;top:520px;">0</div><div class="c r" style="left:1302.26px;top:520px;">38</div><div class="c r" style="left:1366.26px;top:520px;">43.5</div><div class="c r" style="left:1430.26px;top:520px;">0</div><div class="c r" style="left:1494.26px;top:520px;">0</div><div class="c r" style="left:1558.26px;top:520px;">0</div><div class="c r" style="left:1622.26px;top:520px;">0</div><div class="c r" style="left:1686.26px;top:520px;">433.3</div><div class="c r" style="left:1750.26px;top:520px;">-7.9</div><div class="c l" style="left:27px;top:540px;width:71.59px;transform:scaleX(0.88);">60BH6020:</div><div class="c l" style="left:91px;top:540px;">2024-03-14 00:00:00</div><div class="c r" style="left:150.26px;top:540px;">2</div><div class="c r" style="left:214.26px;top:540px;">1</div><div class="c r" style="left:342.26px;top:540px;">5665.6</div><div class="c r" style="left:470.26px;top:540px;">6.444</div><div class="c r" style="left:534.26px;top:540px;">0</div><div class="c r" style="left:598.26px;top:540px;">-3.616</div><div class="c r" style="left:662.26px;top:540px;">2.831</div><div class="c l" style="left:731px;top:540px;">H11500</div><div class="c r" style="left:790.26px;top:540px;">247.2</div><div class="c r" style="left:854.26px;top:540px;">14.6</div><div class="c r" style="left:918.26px;top:540px;">49.96</div><div class="c r" style="left:982.26px;top:540px;">-3.616</div><div class="c r" style="left:1046.26px;top:540px;">5.5</div><div class="c r" style="left:1110.26px;top:540px;">0</div><div class="c r" style="left:1174.26px;top:540px;">2.7</div><div class="c r" style="left:1238.26px;top:540px;">0</div><div class="c r" style="left:1302.26px;top:540px;">38.1</div><div class="c r" style="left:1366.26px;top:540px;">43.5</div><div class="c r" style="left:1430.26px;top:540px;">0</div><div class="c r" style="left:1494.26px;top:540px;">0</div><div class="c r" style="left:1558.26px;top:540px;">0</div><div class="c r" style="left:1622.26px;top:540px;">0</div><div class="c r" style="left:1686.26px;top:540px;">433.4</div><div class="c r" style="left:1750.26px;top:540px;">-8</div><div class="c l" style="left:27px;top:560px;width:71.59px;transform:scaleX(0.88);">60BH6020:</div><div class="c l" style="left:91px;top:560px;">2024-03-14 00:00:00</div><div class="c r" style="left:150.26px;top:560px;">2</div><div class="c r" style="left:214.26px;top:560px;">1</div><div class="c r" style="left:342.26px;top:560px;">5665.6</div><div class="c r" style="left:470.26px;top:560px;">6.83</div><div class="c r" style="left:534.26px;top:560px;">0</div><div class="c r" style="left:598.26px;top:560px;">-3.611</div><div class="c r" style="left:662.26px;top:560px;">3.219</div><div class="c l" style="left:731px;top:560px;">H11500</div><div class="c r" style="left:790.26px;top:560px;">247.1</div><div class="c r" style="left:854.26px;top:560px;">14.6</div><div class="c r" style="left:918.26px;top:560px;">50.04</div><div class="c r" style="left:982.26px;top:560px;">-3.611</div><div class="c r" style="left:1046.26px;top:560px;">5.6</div><div class="c r" style="left:1110.26px;top:560px;">0</div><div class="c r" style="left:1174.26px;top:560px;">2.7</div><div class="c r" style="left:1238.26px;top:560px;">0</div><div class="c r" style="left:1302.26px;top:560px;">38</div><div class="c r" style="left:1366.26px;top:560px;">43.5</div><div class="c r" style="left:1430.26px;top:560px;">0</div><div class="c r" style="left:1494.26px;top:560px;">0</div><div class="c r" style="left:1558.26px;top:560px;">0</div><div class="c r" style="left:1622.26px;top:560px;">0</div><div class="c r" style="left:1686.26px;top:560px;">433.5</div><div class="c r" style="left:1750.26px;top:560px;">-7.9</div><div class="c l" style="left:27px;top:580px;width:71.59px;transform:scaleX(0.88);">60BH6020:</div><div class="c l" style="left:91px;top:580px;">2024-03-14 00:00:00</div><div class="c r" style="left:150.26px;top:580px;">2</div><div class="c r" style="left:214.26px;top:580px;">1</div><div class="c r" style="left:342.26px;top:580px;">5665.6</div><div class="c r" style="left:470.26px;top:580px;">6.358</div><div class="c r" style="left:534.26px;top:580px;">0</div><div class="c r" style="left:598.26px;top:580px;">-3.62</div><div class="c r" style="left:662.26px;top:580px;">2.743</div><div class="c l" style="left:731px;top:580px;">H11500</div><div class="c r" style="left:790.26px;top:580px;">245.2</div><div class="c r" style="left:854.26px;top:580px;">14.7</div><div class="c r" style="left:918.26px;top:580px;">49.96</div><div class="c r" style="left:982.26px;top:580px;">-3.62</div><div class="c r" style="left:1046.26px;top:580px;">5.5</div><div class="c r" style="left:1110.26px;top:580px;">0</div><div class="c r" style="left:1174.26px;top:580px;">2.7</div><div class="c r" style="left:1238.26px;top:580px;">0</div><div class="c r" style="left:1302.26px;top:580px;">38</div><div class="c r" style="left:1366.26px;top:580px;">43.5</div><div class="c r" style="left:1430.26px;top:580px;">0</div><div class="c r" style="left:1494.26px;top:580px;">0</div><div class="c r" style="left:1558.26px;top:580px;">0</div><div class="c r" style="left:1622.26px;top:580px;">0</div><div class="c r" style="left:1686.26px;top:580px;">433.6</div><div class="c r" style="left:1750.26px;top:580px;">-7.9</div><div class="c l" style="left:27px;top:600px;width:71.59px;transform:scaleX(0.88);">60BH6020:</div><div class="c l" style="left:91px;top:600px;">2024-03-14 00:00:00</div><div class="c r" style="left:150.26px;top:600px;">2</div><div class="c r" style="left:214.26px;top:600px;">1</div><div class="c r" style="left:342.26px;top:600px;">5665.6</div><div class="c r" style="left:470.26px;top:600px;">6.393</div><div class="c r" style="left:534.26px;top:600px;">0</div><div class="c r" style="left:598.26px;top:600px;">-3.613</div><div class="c r" style="left:662.26px;top:600px;">2.781</div><div class="c l" style="left:731px;top:600px;">H11500</div><div class="c r" style="left:790.26px;top:600px;">246.1</div><div class="c r" style="left:854.26px;top:600px;">14.7</div><div class="c r" style="left:918.26px;top:600px;">50.01</div><div class="c r" style="left:982.26px;top:600px;">-3.613</div><div class="c r" style="left:1046.26px;top:600px;">5.4</div><div class="c r" style="left:1110.26px;top:600px;">0</div><div class="c r" style="left:1174.26px;top:600px;">2.7</div><div class="c r" style="left:1238.26px;top:600px;">0</div><div class="c r" style="left:1302.26px;top:600px;">38.2</div><div class="c r" style="left:1366.26px;top:600px;">43.5</div><div class="c r" style="left:1430.26px;top:600px;">0</div><div class="c r" style="left:1494.26px;top:600px;">0</div><div class="c r" style="left:1558.26px;top:600px;">0</div><div class="c r" style="left:1622.26px;top:600px;">0</div><div class="c r" style="left:1686.26px;top:600px;">433.6</div><div class="c r" style="left:1750.26px;top:600px;">-8</div><div class="c l" style="left:27px;top:620px;width:71.59px;transform:scaleX(0.88);">60BH6020:</div><div class="c l" style="left:91px;top:620px;">2024-03-14 00:00:00</div><div class="c r" style="left:150.26px;top:620px;">2</div><div class="c r" style="left:214.26px;top:620px;">1</div><div class="c r" style="left:342.26px;top:620px;">5665.6</div><div class="c r" style="left:470.26px;top:620px;">6.855</div><div class="c r" style="left:534.26px;top:620px;">0</div><div class="c r" style="left:598.26px;top:620px;">-3.606</div><div class="c r" style="left:662.26px;top:620px;">3.245</div><div class="c l" style="left:731px;top:620px;">H11500</div><div class="c r" style="left:790.26px;top:620px;">246.1</div><div class="c r" style="left:854.26px;top:620px;">14.6</div><div class="c r" style="left:918.26px;top:620px;">50.03</div><div class="c r" style="left:982.26px;top:620px;">-3.606</div><div class="c r" style="left:1046.26px;top:620px;">5.4</div><div class="c r" style="left:1110.26px;top:620px;">0</div><div class="c r" style="left:1174.26px;top:620px;">2.7</div><div class="c r" style="left:1238.26px;top:620px;">0</div><div class="c r" style="left:1302.26px;top:620px;">38.1</div><div class="c r" style="left:1366.26px;top:620px;">43.5</div><div class="c r" style="left:1430.26px;top:620px;">0</div><div class="c r" style="left:1494.26px;top:620px;">0</div><div class="c r" style="left:1558.26px;top:620px;">0</div><div class="c r" style="left:1622.26px;top:620px;">0</div><div class="c r" style="left:1686.26px;top:620px;">433.7</div><div class="c r" style="left:1750.26px;top:620px;">-8</div><div class="c l" style="left:27px;top:640px;width:71.59px;transform:scaleX(0.88);">60BH6020:</div><div class="c l" style="left:91px;top:640px;">2024-03-14 00:00:00</div><div class="c r" style="left:150.26px;top:640px;">2</div><div class="c r" style="left:214.26px;top:640px;">1</div><div class="c r" style="left:342.26px;top:640px;">5665.6</div><div class="c r" style="left:470.26px;top:640px;">6.423</div><div class="c r" style="left:534.26px;top:640px;">0</div><div class="c r" style="left:598.26px;top:640px;">-3.618</div><div class="c r" style="left:662.26px;top:640px;">2.799</div><div class="c l" style="left:731px;top:640px;">H11500</div><div class="c r" style="left:790.26px;top:640px;">245.5</div><div class="c r" style="left:854.26px;top:640px;">14.7</div><div class="c r" style="left:918.26px;top:640px;">50.08</div><div class="c r" style="left:982.26px;top:640px;">-3.618</div><div class="c r" style="left:1046.26px;top:640px;">5.3</div><div class="c r" style="left:1110.26px;top:640px;">0</div><div class="c r" style="left:1174.26px;top:640px;">2.7</div><div class="c r" style="left:1238.26px;top:640px;">0</div><div class="c r" style="left:1302.26px;top:640px;">38.2</div><div class="c r" style="left:1366.26px;top:640px;">43.5</div><div class="c r" style="left:1430.26px;top:640px;">0</div><div class="c r" style="left:1494.26px;top:640px;">0</div><div class="c r" style="left:1558.26px;top:640px;">0</div><div class="c r" style="left:1622.26px;top:640px;">0</div><div class="c r" style="left:1686.26px;top:640px;">433.8</div><div class="c r" style="left:1750.26px;top:640px;">-7.9</div><div class="c l" style="left:27px;top:660px;width:71.59px;transform:scaleX(0.88);">60BH6020:</div><div class="c l" style="left:91px;top:660px;">2024-03-14 00:00:00</div><div class="c r" style="left:150.26px;top:660px;">2</div><div class="c r" style="left:214.26px;top:660px;">1</div><div class="c r" style="left:342.26px;top:660px;">5665.6</div><div class="c r" style="left:470.26px;top:660px;">6.37</div><div class="c r" style="left:534.26px;top:660px;">0</div><div class="c r" style="left:598.26px;top:660px;">-3.609</div><div class="c r" style="left:662.26px;top:660px;">2.764</div><div class="c l" style="left:731px;top:660px;">H11500</div><div class="c r" style="left:790.26px;top:660px;">246.3</div><div class="c r" style="left:854.26px;top:660px;">14.6</div><div class="c r" style="left:918.26px;top:660px;">49.97</div><div class="c r" style="left:982.26px;top:660px;">-3.609</div><div class="c r" style="left:1046.26px;top:660px;">5.2</div><div class="c r" style="left:1110.26px;top:660px;">0</div><div class="c r" style="left:1174.26px;top:660px;">2.7</div><div class="c r" style="left:1238.26px;top:660px;">0</div><div class="c r" style="left:1302.26px;top:660px;">38.3</div><div class="c r" style="left:1366.26px;top:660px;">43.5</div><div class="c r" style="left:1430.26px;top:660px;">0</div><div class="c r" style="left:1494.26px;top:660px;">0</div><div class="c r" style="left:1558.26px;top:660px;">0</div><div class="c r" style="left:1622.26px;top:660px;">0</div><div class="c r" style="left:1686.26px;top:660px;">433.9</div><div class="c r" style="left:1750.26px;top:660px;">-7.9</div><div class="c l" style="left:27px;top:680px;width:71.59px;transform:scaleX(0.88);">60BH6020:</div><div class="c l" style="left:91px;top:680px;">2024-03-14 00:00:00</div><div class="c r" style="left:150.26px;top:680px;">2</div><div class="c r" style="left:214.26px;top:680px;">1</div><div class="c r" style="left:342.26px;top:680px;">5665.6</div><div class="c r" style="left:470.26px;top:680px;">6.825</div><div class="c r" style="left:534.26px;top:680px;">0</div><div class="c r" style="left:598.26px;top:680px;">-3.616</div><div class="c r" style="left:662.26px;top:680px;">3.213</div><div class="c l" style="left:731px;top:680px;">H11500</div><div class="c r" style="left:790.26px;top:680px;">245.7</div><div class="c r" style="left:854.26px;top:680px;">14.7</div><div class="c r" style="left:918.26px;top:680px;">50.01</div><div class="c r" style="left:982.26px;top:680px;">-3.616</div><div class="c r" style="left:1046.26px;top:680px;">5.2</div><div class="c r" style="left:1110.26px;top:680px;">0</div><div class="c r" style="left:1174.26px;top:680px;">2.7</div><div class="c r" style="left:1238.26px;top:680px;">0</div><div class="c r" style="left:1302.26px;top:680px;">38.3</div><div class="c r" style="left:1366.26px;top:680px;">43.5</div><div class="c r" style="left:1430.26px;top:680px;">0</div><div class="c r" style="left:1494.26px;top:680px;">0</div><div class="c r" style="left:1558.26px;top:680px;">0</div><div class="c r" style="left:1622.26px;top:680px;">0</div><div class="c r" style="left:1686.26px;top:680px;">434</div><div class="c r" style="left:1750.26px;top:680px;">-7.9</div><div class="c l" style="left:27px;top:700px;width:71.59px;transform:scaleX(0.88);">60BH6020:</div><div class="c l" style="left:91px;top:700px;">2024-03-14 00:00:00</div><div class="c r" style="left:150.26px;top:700px;">2</div><div class="c r" style="left:214.26px;top:700px;">1</div><div class="c r" style="left:342.26px;top:700px;">5665.6</div><div class="c r" style="left:470.26px;top:700px;">6.403</div><div class="c r" style="left:534.26px;top:700px;">0</div><div class="c r" style="left:598.26px;top:700px;">-3.622</div><div class="c r" style="left:662.26px;top:700px;">2.775</div><div class="c l" style="left:731px;top:700px;">H11500</div><div class="c r" style="left:790.26px;top:700px;">246.5</div><div class="c r" style="left:854.26px;top:700px;">14.7</div><div class="c r" style="left:918.26px;top:700px;">50.04</div><div class="c r" style="left:982.26px;top:700px;">-3.622</div><div class="c r" style="left:1046.26px;top:700px;">4.9</div><div class="c r" style="left:1110.26px;top:700px;">0</div><div class="c r" style="left:1174.26px;top:700px;">2.6</div><div class="c r" style="left:1238.26px;top:700px;">0</div><div class="c r" style="left:1302.26px;top:700px;">38.3</div><div class="c r" style="left:1366.26px;top:700px;">43.6</div><div class="c r" style="left:1430.26px;top:700px;">0</div><div class="c r" style="left:1494.26px;top:700px;">0</div><div class="c r" style="left:1558.26px;top:700px;">0</div><div class="c r" style="left:1622.26px;top:700px;">0</div><div class="c r" style="left:1686.26px;top:700px;">434.2</div><div class="c r" style="left:1750.26px;top:700px;">-8</div><div class="c l" style="left:27px;top:720px;width:71.59px;transform:scaleX(0.88);">60BH6020:</div><div class="c l" style="left:91px;top:720px;">2024-03-14 00:00:00</div><div class="c r" style="left:150.26px;top:720px;">2</div><div class="c r" style="left:214.26px;top:720px;">1</div><div class="c r" style="left:342.26px;top:720px;">5665.6</div><div class="c r" style="left:470.26px;top:720px;">6.596</div><div class="c r" style="left:534.26px;top:720px;">0</div><div class="c r" style="left:598.26px;top:720px;">-3.612</div><div class="c r" style="left:662.26px;top:720px;">2.984</div><div class="c l" style="left:731px;top:720px;">H11500</div><div class="c r" style="left:790.26px;top:720px;">246.8</div><div class="c r" style="left:854.26px;top:720px;">14.6</div><div class="c r" style="left:918.26px;top:720px;">50.09</div><div class="c r" style="left:982.26px;top:720px;">-3.612</div><div class="c r" style="left:1046.26px;top:720px;">4.5</div><div class="c r" style="left:1110.26px;top:720px;">0</div><div class="c r" style="left:1174.26px;top:720px;">2.6</div><div class="c r" style="left:1238.26px;top:720px;">0</div><div class="c r" style="left:1302.26px;top:720px;">38.5</div><div class="c r" style="left:1366.26px;top:720px;">43.5</div><div class="c r" style="left:1430.26px;top:720px;">0</div><div class="c r" style="left:1494.26px;top:720px;">0</div><div class="c r" style="left:1558.26px;top:720px;">0</div><div class="c r" style="left:1622.26px;top:720px;">0</div><div class="c r" style="left:1686.26px;top:720px;">434.3</div><div class="c r" style="left:1750.26px;top:720px;">-7.9</div><div class="c l" style="left:27px;top:740px;width:71.59px;transform:scaleX(0.88);">60BH6020:</div><div class="c l" style="left:91px;top:740px;">2024-03-14 00:00:00</div><div class="c r" style="left:150.26px;top:740px;">2</div><div class="c r" style="left:214.26px;top:740px;">1</div><div class="c r" style="left:342.26px;top:740px;">5665.6</div><div class="c r" style="left:470.26px;top:740px;">6.567</div><div class="c r" style="left:534.26px;top:740px;">0</div><div class="c r" style="left:598.26px;top:740px;">-3.629</div><div class="c r" style="left:662.26px;top:740px;">2.933</div><div class="c l" style="left:731px;top:740px;">H11500</div><div class="c r" style="left:790.26px;top:740px;">246.5</div><div class="c r" style="left:854.26px;top:740px;">14.7</div><div class="c r" style="left:918.26px;top:740px;">50.04</div><div class="c r" style="left:982.26px;top:740px;">-3.629</div><div class="c r" style="left:1046.26px;top:740px;">4</div><div class="c r" style="left:1110.26px;top:740px;">0</div><div class="c r" style="left:1174.26px;top:740px;">2.6</div><div class="c r" style="left:1238.26px;top:740px;">0</div><div class="c r" style="left:1302.26px;top:740px;">38.2</div><div class="c r" style="left:1366.26px;top:740px;">43.6</div><div class="c r" style="left:1430.26px;top:740px;">0</div><div class="c r" style="left:1494.26px;top:740px;">0</div><div class="c r" style="left:1558.26px;top:740px;">0</div><div class="c r" style="left:1622.26px;top:740px;">0</div><div class="c r" style="left:1686.26px;top:740px;">434.4</div><div class="c r" style="left:1750.26px;top:740px;">-8</div><div class="c l" style="left:27px;top:760px;width:71.59px;transform:scaleX(0.88);">60BH6020:</div><div class="c l" style="left:91px;top:760px;">2024-03-14 00:00:00</div><div class="c r" style="left:150.26px;top:760px;">2</div><div class="c r" style="left:214.26px;top:760px;">1</div><div class="c r" style="left:342.26px;top:760px;">5665.6</div><div class="c r" style="left:470.26px;top:760px;">6.567</div><div class="c r" style="left:534.26px;top:760px;">0</div><div class="c r" style="left:598.26px;top:760px;">-3.614</div><div class="c r" style="left:662.26px;top:760px;">2.955</div><div class="c l" style="left:731px;top:760px;">H11500</div><div class="c r" style="left:790.26px;top:760px;">247.3</div><div class="c r" style="left:854.26px;top:760px;">14.6</div><div class="c r" style="left:918.26px;top:760px;">50.01</div><div class="c r" style="left:982.26px;top:760px;">-3.614</div><div class="c r" style="left:1046.26px;top:760px;">3.9</div><div class="c r" style="left:1110.26px;top:760px;">0</div><div class="c r" style="left:1174.26px;top:760px;">2.6</div><div class="c r" style="left:1238.26px;top:760px;">0</div><div class="c r" style="left:1302.26px;top:760px;">38.5</div><div class="c r" style="left:1366.26px;top:760px;">43.6</div><div class="c r" style="left:1430.26px;top:760px;">0</div><div class="c r" style="left:1494.26px;top:760px;">0</div><div class="c r" style="left:1558.26px;top:760px;">0</div><div class="c r" style="left:1622.26px;top:760px;">0</div><div class="c r" style="left:1686.26px;top:760px;">434.6</div><div class="c r" style="left:1750.26px;top:760px;">-7.9</div><div class="c l" style="left:27px;top:780px;width:71.59px;transform:scaleX(0.88);">60BH6020:</div><div class="c l" style="left:91px;top:780px;">2024-03-14 00:00:00</div><div class="c r" style="left:150.26px;top:780px;">2</div><div class="c r" style="left:214.26px;top:780px;">1</div><div class="c r" style="left:342.26px;top:780px;">5665.6</div><div class="c r" style="left:470.26px;top:780px;">6.522</div><div class="c r" style="left:534.26px;top:780px;">0</div><div class="c r" style="left:598.26px;top:780px;">-3.624</div><div class="c r" style="left:662.26px;top:780px;">2.891</div><div class="c l" style="left:731px;top:780px;">H11500</div><div class="c r" style="left:790.26px;top:780px;">247.5</div><div class="c r" style="left:854.26px;top:780px;">14.6</div><div class="c r" style="left:918.26px;top:780px;">49.94</div><div class="c r" style="left:982.26px;top:780px;">-3.624</div><div class="c r" style="left:1046.26px;top:780px;">3.9</div><div class="c r" style="left:1110.26px;top:780px;">0</div><div class="c r" style="left:1174.26px;top:780px;">2.6</div><div class="c r" style="left:1238.26px;top:780px;">0</div><div class="c r" style="left:1302.26px;top:780px;">38.5</div><div class="c r" style="left:1366.26px;top:780px;">43.6</div><div class="c r" style="left:1430.26px;top:780px;">0</div><div class="c r" style="left:1494.26px;top:780px;">0</div><div class="c r" style="left:1558.26px;top:780px;">0</div><div class="c r" style="left:1622.26px;top:780px;">0</div><div class="c r" style="left:1686.26px;top:780px;">434.8</div><div class="c r" style="left:1750.26px;top:780px;">-7.9</div><div class="c l" style="left:27px;top:800px;width:71.59px;transform:scaleX(0.88);">60BH6020:</div><div class="c l" style="left:91px;top:800px;">2024-03-14 00:00:00</div><div class="c r" style="left:150.26px;top:800px;">2</div><div class="c r" style="left:214.26px;top:800px;">1</div><div class="c r" style="left:342.26px;top:800px;">5665.6</div><div class="c r" style="left:470.26px;top:800px;">5.919</div><div class="c r" style="left:534.26px;top:800px;">0</div><div class="c r" style="left:598.26px;top:800px;">-2.996</div><div class="c r" style="left:662.26px;top:800px;">2.917</div><div class="c l" style="left:731px;top:800px;">H11500</div><div class="c r" style="left:790.26px;top:800px;">248.2</div><div class="c r" style="left:854.26px;top:800px;">12.1</div><div class="c r" style="left:918.26px;top:800px;">50.02</div><div class="c r" style="left:982.26px;top:800px;">-2.996</div><div class="c r" style="left:1046.26px;top:800px;">4</div><div class="c r" style="left:1110.26px;top:800px;">0</div><div class="c r" style="left:1174.26px;top:800px;">2.6</div><div class="c r" style="left:1238.26px;top:800px;">0</div><div class="c r" style="left:1302.26px;top:800px;">38.5</div><div class="c r" style="left:1366.26px;top:800px;">43.6</div><div class="c r" style="left:1430.26px;top:800px;">0</div><div class="c r" style="left:1494.26px;top:800px;">0</div><div class="c r" style="left:1558.26px;top:800px;">0</div><div class="c r" style="left:1622.26px;top:800px;">0</div><div class="c r" style="left:1686.26px;top:800px;">434.3</div><div class="c r" style="left:1750.26px;top:800px;">-6.6</div><div class="c l" style="left:27px;top:820px;width:71.59px;transform:scaleX(0.88);">60BH6020:</div><div class="c l" style="left:91px;top:820px;">2024-03-14 00:00:00</div><div class="c r" style="left:150.26px;top:820px;">2</div><div class="c r" style="left:214.26px;top:820px;">1</div><div class="c r" style="left:342.26px;top:820px;">5665.6</div><div class="c r" style="left:470.26px;top:820px;">5.893</div><div class="c r" style="left:534.26px;top:820px;">0</div><div class="c r" style="left:598.26px;top:820px;">-2.589</div><div class="c r" style="left:662.26px;top:820px;">3.305</div><div class="c l" style="left:731px;top:820px;">H11500</div><div class="c r" style="left:790.26px;top:820px;">248.3</div><div class="c r" style="left:854.26px;top:820px;">10.4</div><div class="c r" style="left:918.26px;top:820px;">49.99</div><div class="c r" style="left:982.26px;top:820px;">-2.589</div><div class="c r" style="left:1046.26px;top:820px;">4</div><div class="c r" style="left:1110.26px;top:820px;">0</div><div class="c r" style="left:1174.26px;top:820px;">2.6</div><div class="c r" style="left:1238.26px;top:820px;">0</div><div class="c r" style="left:1302.26px;top:820px;">37.3</div><div class="c r" style="left:1366.26px;top:820px;">43.5</div><div class="c r" style="left:1430.26px;top:820px;">0</div><div class="c r" style="left:1494.26px;top:820px;">0</div><div class="c r" style="left:1558.26px;top:820px;">0</div><div class="c r" style="left:1622.26px;top:820px;">0</div><div class="c r" style="left:1686.26px;top:820px;">433.9</div><div class="c r" style="left:1750.26px;top:820px;">-5.6</div><div class="c l" style="left:27px;top:840px;width:71.59px;transform:scaleX(0.88);">60BH6020:</div><div class="c l" style="left:91px;top:840px;">2024-03-14 00:00:00</div><div class="c r" style="left:150.26px;top:840px;">2</div><div class="c r" style="left:214.26px;top:840px;">1</div><div class="c r" style="left:342.26px;top:840px;">5665.6</div><div class="c r" style="left:470.26px;top:840px;">5.104</div><div class="c r" style="left:534.26px;top:840px;">0</div><div class="c r" style="left:598.26px;top:840px;">-2.23</div><div class="c r" style="left:662.26px;top:840px;">2.87</div><div class="c l" style="left:731px;top:840px;">H11500</div><div class="c r" style="left:790.26px;top:840px;">249.2</div><div class="c r" style="left:854.26px;top:840px;">8.9</div><div class="c r" style="left:918.26px;top:840px;">50.01</div><div class="c r" style="left:982.26px;top:840px;">-2.23</div><div class="c r" style="left:1046.26px;top:840px;">3.8</div><div class="c r" style="left:1110.26px;top:840px;">0</div><div class="c r" style="left:1174.26px;top:840px;">2.6</div><div class="c r" style="left:1238.26px;top:840px;">0</div><div class="c r" style="left:1302.26px;top:840px;">36.6</div><div class="c r" style="left:1366.26px;top:840px;">43.3</div><div class="c r" style="left:1430.26px;top:840px;">0</div><div class="c r" style="left:1494.26px;top:840px;">0</div><div class="c r" style="left:1558.26px;top:840px;">0</div><div class="c r" style="left:1622.26px;top:840px;">0</div><div class="c r" style="left:1686.26px;top:840px;">433.7</div><div class="c r" style="left:1750.26px;top:840px;">-4.8</div><div class="c l" style="left:27px;top:860px;width:71.59px;transform:scaleX(0.88);">60BH6020:</div><div class="c l" style="left:91px;top:860px;">2024-03-14 00:00:00</div><div class="c r" style="left:150.26px;top:860px;">2</div><div class="c r" style="left:214.26px;top:860px;">1</div><div class="c r" style="left:342.26px;top:860px;">5665.6</div><div class="c r" style="left:470.26px;top:860px;">4.171</div><div class="c r" style="left:534.26px;top:860px;">0</div><div class="c r" style="left:598.26px;top:860px;">-1.908</div><div class="c r" style="left:662.26px;top:860px;">2.257</div><div class="c l" style="left:731px;top:860px;">H11500</div><div class="c r" style="left:790.26px;top:860px;">250.4</div><div class="c r" style="left:854.26px;top:860px;">7.6</div><div class="c r" style="left:918.26px;top:860px;">50.08</div><div class="c r" style="left:982.26px;top:860px;">-1.908</div><div class="c r" style="left:1046.26px;top:860px;">3.9</div><div class="c r" style="left:1110.26px;top:860px;">0</div><div class="c r" style="left:1174.26px;top:860px;">2.6</div><div class="c r" style="left:1238.26px;top:860px;">0</div><div class="c r" style="left:1302.26px;top:860px;">35.8</div><div class="c r" style="left:1366.26px;top:860px;">43</div><div class="c r" style="left:1430.26px;top:860px;">0</div><div class="c r" style="left:1494.26px;top:860px;">0</div><div class="c r" style="left:1558.26px;top:860px;">0</div><div class="c r" style="left:1622.26px;top:860px;">0</div><div class="c r" style="left:1686.26px;top:860px;">433.5</div><div class="c r" style="left:1750.26px;top:860px;">-4.1</div><div class="c l" style="left:27px;top:880px;width:71.59px;transform:scaleX(0.88);">60BH6020:</div><div class="c l" style="left:91px;top:880px;">2024-03-14 00:00:00</div><div class="c r" style="left:150.26px;top:880px;">2</div><div class="c r" style="left:214.26px;top:880px;">1</div><div class="c r" style="left:342.26px;top:880px;">5665.6</div><div class="c r" style="left:470.26px;top:880px;">2.178</div><div class="c r" style="left:534.26px;top:880px;">0</div><div class="c r" style="left:598.26px;top:880px;">-1.915</div><div class="c r" style="left:662.26px;top:880px;">0.261</div><div class="c l" style="left:731px;top:880px;">H11500</div><div class="c r" style="left:790.26px;top:880px;">251.9</div><div class="c r" style="left:854.26px;top:880px;">7.6</div><div class="c r" style="left:918.26px;top:880px;">50.14</div><div class="c r" style="left:982.26px;top:880px;">-1.915</div><div class="c r" style="left:1046.26px;top:880px;">3.9</div><div class="c r" style="left:1110.26px;top:880px;">0</div><div class="c r" style="left:1174.26px;top:880px;">2.6</div><div class="c r" style="left:1238.26px;top:880px;">0</div><div class="c r" style="left:1302.26px;top:880px;">35</div><div class="c r" style="left:1366.26px;top:880px;">42.5</div><div class="c r" style="left:1430.26px;top:880px;">0</div><div class="c r" style="left:1494.26px;top:880px;">0</div><div class="c r" style="left:1558.26px;top:880px;">0</div><div class="c r" style="left:1622.26px;top:880px;">0</div><div class="c r" style="left:1686.26px;top:880px;">433.7</div><div class="c r" style="left:1750.26px;top:880px;">-4.1</div><div class="c l" style="left:27px;top:900px;width:71.59px;transform:scaleX(0.88);">60BH6020:</div><div class="c l" style="left:91px;top:900px;">2024-03-14 00:00:00</div><div class="c r" style="left:150.26px;top:900px;">2</div><div class="c r" style="left:214.26px;top:900px;">1</div><div class="c r" style="left:342.26px;top:900px;">5665.6</div><div class="c r" style="left:470.26px;top:900px;">5.38</div><div class="c r" style="left:534.26px;top:900px;">0</div><div class="c r" style="left:598.26px;top:900px;">-1.643</div><div class="c r" style="left:662.26px;top:900px;">3.748</div><div class="c l" style="left:731px;top:900px;">H11500</div><div class="c r" style="left:790.26px;top:900px;">249.6</div><div class="c r" style="left:854.26px;top:900px;">6.6</div><div class="c r" style="left:918.26px;top:900px;">50.04</div><div class="c r" style="left:982.26px;top:900px;">-1.643</div><div class="c r" style="left:1046.26px;top:900px;">3.7</div><div class="c r" style="left:1110.26px;top:900px;">0</div><div class="c r" style="left:1174.26px;top:900px;">2.6</div><div class="c r" style="left:1238.26px;top:900px;">0</div><div class="c r" style="left:1302.26px;top:900px;">34.5</div><div class="c r" style="left:1366.26px;top:900px;">42.2</div><div class="c r" style="left:1430.26px;top:900px;">0</div><div class="c r" style="left:1494.26px;top:900px;">0</div><div class="c r" style="left:1558.26px;top:900px;">0</div><div class="c r" style="left:1622.26px;top:900px;">0</div><div class="c r" style="left:1686.26px;top:900px;">433.4</div><div class="c r" style="left:1750.26px;top:900px;">-3.5</div><div class="c l" style="left:27px;top:920px;width:71.59px;transform:scaleX(0.88);">60BH6020:</div><div class="c l" style="left:91px;top:920px;">2024-03-14 00:00:00</div><div class="c r" style="left:150.26px;top:920px;">2</div><div class="c r" style="left:214.26px;top:920px;">1</div><div class="c r" style="left:342.26px;top:920px;">5665.6</div><div class="c r" style="left:470.26px;top:920px;">4.687</div><div class="c r" style="left:534.26px;top:920px;">0</div><div class="c r" style="left:598.26px;top:920px;">-1.373</div><div class="c r" style="left:662.26px;top:920px;">3.315</div><div class="c l" style="left:731px;top:920px;">H11500</div><div class="c r" style="left:790.26px;top:920px;">249.9</div><div class="c r" style="left:854.26px;top:920px;">5.5</div><div class="c r" style="left:918.26px;top:920px;">50.03</div><div class="c r" style="left:982.26px;top:920px;">-1.373</div><div class="c r" style="left:1046.26px;top:920px;">3.6</div><div class="c r" style="left:1110.26px;top:920px;">0</div><div class="c r" style="left:1174.26px;top:920px;">2.6</div><div class="c r" style="left:1238.26px;top:920px;">0</div><div class="c r" style="left:1302.26px;top:920px;">34.5</div><div class="c r" style="left:1366.26px;top:920px;">42</div><div class="c r" style="left:1430.26px;top:920px;">0</div><div class="c r" style="left:1494.26px;top:920px;">0</div><div class="c r" style="left:1558.26px;top:920px;">0</div><div class="c r" style="left:1622.26px;top:920px;">0</div><div class="c r" style="left:1686.26px;top:920px;">433.4</div><div class="c r" style="left:1750.26px;top:920px;">-3</div><div class="a" style="left:25px;top:278px;width:67px;height:23px;border:2px solid #1e6e42;box-sizing:border-box"></div><div class="a" style="left:86px;top:295px;width:7px;height:7px;background:#fff"></div><div class="a" style="left:88px;top:297px;width:5px;height:5px;background:#1e6e42"></div><div class="a" style="left:45px;top:303px;width:41px;height:626.5px;background:#000"></div><div class="a" style="left:62.7px;top:912.5px;width:2.6px;height:1.2px;background:#fff"></div><div class="a" style="left:66.3px;top:912.5px;width:2.6px;height:1.2px;background:#fff"></div><div class="a" style="left:1837px;top:260px;width:21px;height:682px;background:#f0f0f0"></div><svg class="a" style="left:1843.5px;top:264px;" width="10" height="8" viewBox="0 0 10 8"><path d="M5 0.8 L9.3 7.2 H0.7 Z" fill="#7a7a7a"/></svg><div class="a" style="left:1844.4px;top:277px;width:8.4px;height:139px;background:#858585;border-radius:4.2px"></div><svg class="a" style="left:1843.5px;top:931.5px;" width="11" height="8" viewBox="0 0 11 8"><path d="M5.5 7.2 L10 0.8 H1 Z" fill="#7a7a7a"/></svg><div class="a" style="left:1px;top:942px;width:115px;height:32px;background:#f0f0f0;border-top-right-radius:6px"></div><div class="a" style="left:364px;top:942px;width:1495px;height:32px;background:#f0f0f0;border-top-left-radius:6px"></div><svg class="a" style="left:28px;top:952px;" width="9" height="11" viewBox="0 0 9 11"><path d="M7.5 1 L2 5.5 L7.5 10" fill="none" stroke="#b0b0b0" stroke-width="1.2"/></svg><svg class="a" style="left:61px;top:952px;" width="9" height="11" viewBox="0 0 9 11"><path d="M1.5 1 L7 5.5 L1.5 10" fill="none" stroke="#b0b0b0" stroke-width="1.2"/></svg><div class="a" style="left:116px;top:940px;width:248px;height:30px;background:#fff;border-radius:0 0 6px 6px;box-shadow:0 1px 1.5px rgba(0,0,0,0.10)"></div><svg class="a" style="left:119px;top:946px;" width="238" height="18" viewBox="0 0 238 18"><path d="M3 3 C60 1 170 1 234 2.5 C237 6 237 12 234 15.5 C170 17 60 17 3 15.5 C1 11 1 7 3 3 Z" fill="#000"/></svg><div class="a" style="left:124.5px;top:965px;width:230.5px;height:1.8px;background:#1e6e42"></div><div class="a" style="left:367px;top:949px;width:1px;height:18px;background:#c8c8c8"></div><svg class="a" style="left:409px;top:952px;" width="13" height="13" viewBox="0 0 13 13"><path d="M6.5 0.5 V12.5 M0.5 6.5 H12.5" stroke="#424242" stroke-width="1.1"/></svg><div class="a" style="left:1117.5px;top:954px;width:2.2px;height:2.2px;background:#424242;border-radius:1px"></div><div class="a" style="left:1117.5px;top:957.8px;width:2.2px;height:2.2px;background:#424242;border-radius:1px"></div><div class="a" style="left:1117.5px;top:961.6px;width:2.2px;height:2.2px;background:#424242;border-radius:1px"></div><svg class="a" style="left:1138px;top:952px;" width="10" height="11" viewBox="0 0 10 11"><path d="M9 0.5 V10.5 L1 5.5 Z" fill="#6e6e6e"/></svg><div class="a" style="left:1151px;top:952.7px;width:161px;height:9px;background:#8a8a8a;border-radius:4.5px"></div><svg class="a" style="left:1826.5px;top:952px;" width="10" height="11" viewBox="0 0 10 11"><path d="M1 0.5 V10.5 L9 5.5 Z" fill="#6e6e6e"/></svg><div class="a" style="left:1px;top:974px;width:1858px;height:1px;background:#d6d6d6"></div><div class="a" style="left:1px;top:975px;width:1858px;height:21px;background:#f3f3f3"></div><span class="t" style="left:11.91px;top:979.00px;font-size:12px;color:#303030;transform:scaleX(0.8972);">Ready</span><div class="a" style="left:1548px;top:975px;width:40px;height:21px;background:#dedede"></div><svg class="a" style="left:1560px;top:977px;" width="15" height="15" viewBox="0 0 15 15"><g fill="none" stroke="#333" stroke-width="1.3"><rect x="1.3" y="1.3" width="12" height="12"/><path d="M1.3 5.3 H13.3 M1.3 9.3 H13.3 M5.3 1.3 V13.3 M9.3 1.3 V13.3"/></g></svg><svg class="a" style="left:1600px;top:977px;" width="16" height="15" viewBox="0 0 16 15"><g fill="none" stroke="#333" stroke-width="1.1"><rect x="1.2" y="1.2" width="13.2" height="12.2"/><rect x="4" y="3.5" width="7.6" height="7.6"/><path d="M5.5 5.8 H10.2 M5.5 7.5 H10.2 M5.5 9.2 H10.2"/></g></svg><svg class="a" style="left:1640px;top:977px;" width="16" height="15" viewBox="0 0 16 15"><g fill="none" stroke="#333" stroke-width="1.1"><rect x="1.2" y="1.2" width="13.2" height="12.2"/><path d="M4.4 1.2 V7 H8.4 V1.2"/></g></svg><div class="a" style="left:1674px;top:984.5px;width:7px;height:1.1px;background:#333"></div><div class="a" style="left:1687px;top:985px;width:99.5px;height:1px;background:#8a8a8a"></div><div class="a" style="left:1735px;top:980px;width:5px;height:10.5px;background:#555;border-radius:1px"></div><svg class="a" style="left:1791px;top:979.5px;" width="10" height="10" viewBox="0 0 10 10"><path d="M4.8 0.5 V9.5 M0.3 5 H9.3" stroke="#333" stroke-width="1"/></svg><span class="t" style="left:1812.71px;top:978.00px;font-size:11.5px;color:#333;transform:scaleX(0.9202);">100%</span><div class="a" style="left:0px;top:49px;width:1px;height:948px;background:#127c44"></div><div class="a" style="left:1px;top:50px;width:1px;height:946px;background:#e6f5eb"></div><div class="a" style="left:1859px;top:49px;width:1px;height:948px;background:#127c44"></div><div class="a" style="left:1858px;top:50px;width:1px;height:946px;background:#e6f5eb"></div><div class="a" style="left:0px;top:996px;width:1860px;height:1px;background:#127c44"></div></body></html>
